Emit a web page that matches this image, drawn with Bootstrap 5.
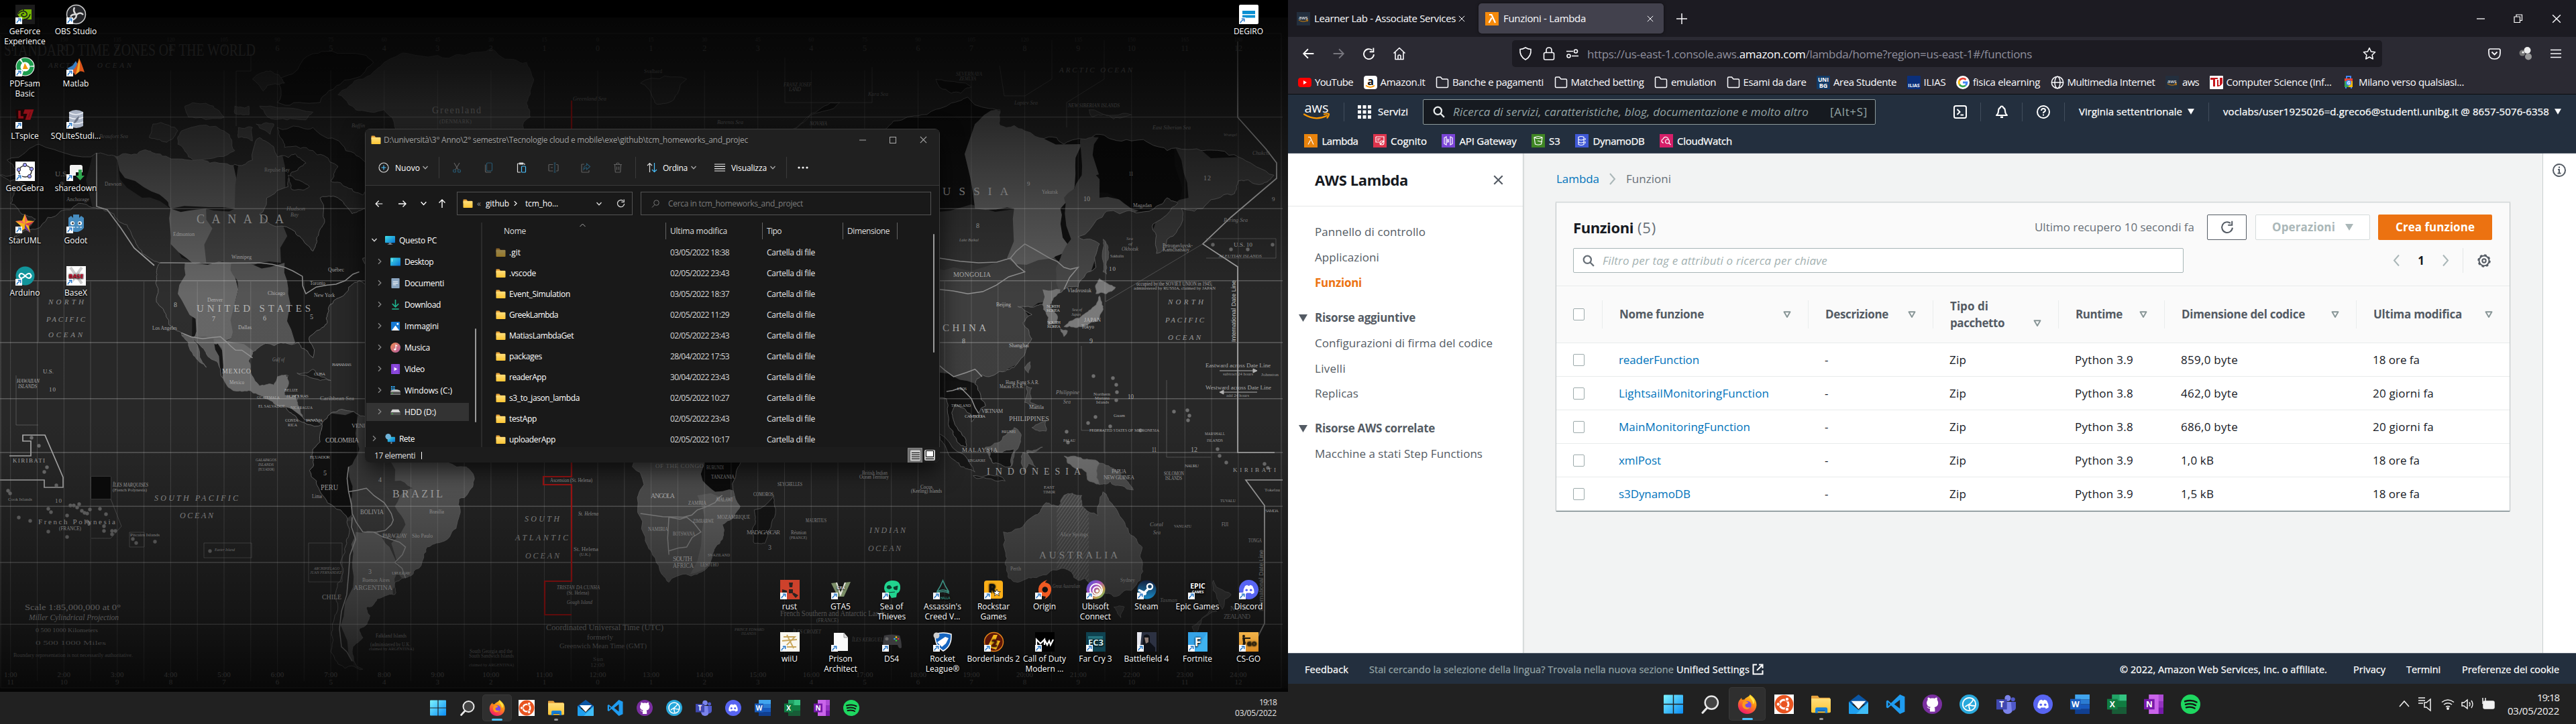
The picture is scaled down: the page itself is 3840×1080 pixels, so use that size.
<!DOCTYPE html>
<html lang="it">
<head>
<meta charset="utf-8">
<title>Desktop</title>
<link rel="stylesheet" href="https://cdn.jsdelivr.net/npm/bootstrap@5.3.0/dist/css/bootstrap.min.css">
<style>
body{width:3840px;height:1080px;overflow:hidden;background:#000;font-family:"Open Sans","Noto Sans",sans-serif;font-size:12px;line-height:15px;color:#fff}
svg{display:block;flex:none;overflow:visible}
[data-w]{white-space:pre;display:inline-block;flex:none}
.screen{width:1920px;height:1080px;overflow:hidden}
.wall{left:0;top:0;z-index:0}
.wall text{font-family:"Liberation Serif",serif}
.icon-grid{display:grid;grid-template-columns:repeat(25,76px);grid-template-rows:repeat(13,78px);padding-top:7px;margin-left:-1px;height:1032px;z-index:1}
.shortcut{font-size:12px;line-height:15px;text-shadow:0 1px 2px #000,0 0 3px #000;white-space:nowrap}
.shortcut .tile{width:29px;height:29px;margin-bottom:3px}
.shortcut .arrow{left:0;bottom:0}
.taskbar{background:#212121;z-index:2}
.taskbar-l{height:48px;padding-left:631px;padding-right:17px}
.taskbar-r{height:60px;padding-left:547px;padding-right:25px}
.taskbar-l .slot{width:44px;height:40px}
.taskbar-r .slot{width:55.1px;height:50px}
.slot-on{background:#2f2f2f;border-radius:5px;box-shadow:inset 0 0 0 1px #383838}
.slot .ind{bottom:1px;height:3px;border-radius:2px}
.clock{font-size:12px;line-height:16px;color:#e4e4e4}
.clock-lg{font-size:15px;line-height:20px;color:#f2f2f2}
/* file explorer */
.win{left:544px;top:192px;width:857px;height:498px;background:#191919;border-radius:8px;box-shadow:0 0 0 1px #3c3c3c inset,0 12px 34px rgba(0,0,0,.7);z-index:1;overflow:hidden}
.win-title{height:31px;padding-left:8px;color:#9d9d9d}
.win-head{background:#202020;border-bottom:1px solid #3a3a3a;height:84px;margin:1px 1px 0}
.win-tools{height:52px}
.vline{width:1px;background:#3b3b3b;flex:none}
.win-nav{height:54px;margin-top:1px;padding-bottom:3px}
.win-body{height:335px;overflow:hidden}
.fbox{border:1px solid #535353;height:35px}
.side{width:175px;border-right:2px solid #2b2b2b;height:335px}
.side-row{height:32px}
.side-on{background:#333}
.fhead{height:25px}
.fhead div{border-left:1px solid #636363;height:25px;padding-left:6px;line-height:25px;color:#dedede}
.frow{height:31px}
.c-name{width:240px}.c-date{width:144px}.c-type{width:120px}
.thumb{width:2px;background:#9a9a9a;border-radius:1px;z-index:2}
.win-status{background:#1c1c1c;height:24px;padding-left:14px;color:#dcdcdc}
/* browser */
.ff-tabs{background:#1c1b22;height:55px;font-size:15px;color:#fbfbfe}
.ff-tab{height:45px;margin-top:5px}
.ff-tab-on{background:#42414d;border-radius:5px;box-shadow:0 0 4px rgba(0,0,0,.5)}
.ff-nav{background:#2b2a33;height:50px}
.ff-url{background:#1c1b22;border-radius:5px;height:40px;width:1297px;font-size:17px;color:#8f8f9d}
.ff-url b{color:#fbfbfe;font-weight:400}
.ff-marks{background:#2b2a33;height:36px;font-size:15px;border-bottom:1px solid #0c0c0d;padding-left:15px;color:#fbfbfe}
.ff-marks .bm{margin-right:15.5px}
.aws-top{background:#232f3e;height:88px;border-bottom:1px solid #4b5563;font-size:15px}
.aws-top .fw-semibold,.aws-foot{font-weight:500!important;-webkit-text-stroke:.25px currentColor}
.aws-row{height:51px}
.aws-div{width:1px;height:28px;background:#414d5c;flex:none}
.aws-search{width:675px;height:38px;background:#161a20;border:1px solid #8d9a9b;border-radius:2px;font-size:17px;color:#95a5a6}
.aws-body{height:745px;background:#f2f3f3;font-size:17px;line-height:22px;color:#16191f}
.aws-side{width:351px;background:#fff;border-right:1px solid #c9cfcf;color:#545b64;box-shadow:1px 0 2px rgba(0,0,0,.08)}
.aws-side h2{font-size:22px;line-height:24px;font-weight:700;color:#16191f;margin:0}
.aws-side .ttl{height:79px;border-bottom:1px solid #e5e8e8;padding:0 29px 0 40px}
.nav-it{padding-left:40px;height:38px}
.nav-sec{padding-left:16px;font-weight:700;margin-top:15px;height:38px;gap:11px}
.act{color:#ec7211;font-weight:700}
.info-strip{width:50px;background:#fff;border-left:1px solid #c9cfcf}
.panel{width:1421px;margin-top:35px;background:#fff;box-shadow:0 1px 1px rgba(0,28,36,.5),0 0 1px 1px rgba(0,28,36,.13)}
.panel-top{background:#fafafa;height:125px;border-bottom:1px solid #e8ebeb;border-top:1px solid #eaeded}
.panel-h{font-size:22px}
.flt{width:910px;height:37px;border:1px solid #a7b5b6;border-radius:2px;background:#fff;color:#a3b1b1}
.bt{height:38px;border-radius:2px;font-weight:700;font-size:17px;padding:0;line-height:20px}
.bt-reload{width:59px;border:1px solid #545b64;background:#fff}
.bt-op{width:171px;border:1px solid #d5dbdb;background:#fff;color:#aab7b8}
.bt-go,.bt-go:hover{width:170px;background:#ec7211;color:#fff;border:0}
.fn-table{table-layout:fixed;margin:0;width:1421px;color:#16191f;--bs-table-bg:transparent}
.fn-table th{height:84px;background:#fafafa;color:#545b64;vertical-align:middle;padding:0;line-height:25px;border-bottom:1px solid #e8ebeb}
.fn-table th>div{height:42px;border-left:1px solid #eaeded;padding:0 25px 0 25px}
.fn-table th.first>div{border:0}
.fn-table td{height:50px;padding:1px 0 0 25px;vertical-align:middle;border-bottom:1px solid #e8ebeb}
.fn-table .first{padding-left:25px}
.fn-table th.first>div{padding:0}
.cbx{width:17px;height:18px;border:1px solid #9caaab;border-radius:2px;background:#fff}
.lnk{color:#0073bb}
.aws-foot{background:#232f3e;height:46px;border-top:1px solid #55606d;font-size:14.5px;padding:2px 25px 0}
</style>
</head>
<body class="d-flex">
<svg width="0" height="0" class="position-absolute">
<defs>
<linearGradient id="gw" x1="0" y1="0" x2="1" y2="1"><stop offset="0" stop-color="#7df3ff"/><stop offset="1" stop-color="#0a8df5"/></linearGradient>
<linearGradient id="gf" x1="0" y1="0" x2="0" y2="1"><stop offset="0" stop-color="#ffde7a"/><stop offset="1" stop-color="#fdc534"/></linearGradient>
<linearGradient id="gfx" x1=".8" y1="0" x2=".3" y2="1"><stop offset="0" stop-color="#ffe226"/><stop offset=".45" stop-color="#ff8a16"/><stop offset="1" stop-color="#f0136f"/></linearGradient>
<linearGradient id="gd" x1="0" y1="0" x2="1" y2="1"><stop offset="0" stop-color="#3fe0e8"/><stop offset="1" stop-color="#0a6fd0"/></linearGradient>
<linearGradient id="gm" x1="0" y1="0" x2="1" y2="1"><stop offset="0" stop-color="#f08a4e"/><stop offset="1" stop-color="#b65fa5"/></linearGradient>
<linearGradient id="gub" x1="0" y1="0" x2="1" y2="1"><stop offset="0" stop-color="#3a55d8"/><stop offset=".4" stop-color="#a54fc0"/><stop offset=".7" stop-color="#c7a24a"/><stop offset="1" stop-color="#2fae7a"/></linearGradient>
<linearGradient id="gst" x1="0" y1="0" x2="0" y2="1"><stop offset="0" stop-color="#141f3d"/><stop offset="1" stop-color="#1889c4"/></linearGradient>
<linearGradient id="gcs" x1="0" y1="0" x2="0" y2="1"><stop offset="0" stop-color="#f3b44a"/><stop offset="1" stop-color="#d98a22"/></linearGradient>
</defs>
<!-- taskbar -->
<symbol id="t-win" viewBox="0 0 24 24"><path fill="url(#gw)" d="M0 1.5Q0 .5 1 .5H11.4V11.4H0zM12.6.5H23q1 0 1 1v9.9H12.6zM0 12.6H11.4V23.5H1q-1 0-1-1zM12.6 12.6H24v9.9q0 1-1 1H12.6z"/></symbol>
<symbol id="t-search" viewBox="0 0 24 24"><circle cx="13.5" cy="10" r="8" fill="#444" stroke="#e8e8e8" stroke-width="2"/><path d="M8 16.5 2.5 22.5" stroke="#e8e8e8" stroke-width="2.6" stroke-linecap="round"/></symbol>
<symbol id="t-fox" viewBox="0 0 24 24"><path fill="url(#gfx)" d="M3 6.5 5 4.2l.6 2.3 3-.3C10 3.500 14 3.500 15.500 0c4 3 8.300 7 8 13.500C23 20 18 24 12 24S.8 19.500.7 13.300C.7 10 1.600 8 3 6.500z"/><circle cx="12.200" cy="13" r="5" fill="#7b4ae2"/><path d="M7 9c3-1.500 5 0 6.500 1-1 2-4 1-4 3.500 0 2 3 3.500 6 2-2 4.500-9.500 3.500-9.500-3z" fill="#ff9a1c"/><path d="M15.500 1c-1 4 4 5 3.500 11 2-1 2-4 1.500-5.500C19.500 4.500 17 3 15.500 1z" fill="#ffe74a"/></symbol>
<symbol id="t-ubu" viewBox="0 0 24 24"><path fill="#fff" d="M0 0h24v24H0z"/><circle cx="12" cy="12" r="11.400" fill="#e95420"/><circle cx="12" cy="12" r="5.400" fill="none" stroke="#fff" stroke-width="2.400"/><g fill="#fff" stroke="#e95420"><circle cx="4.800" cy="12" r="2.300"/><circle cx="15.700" cy="5.800" r="2.300"/><circle cx="15.700" cy="18.200" r="2.300"/></g></symbol>
<symbol id="t-exp" viewBox="0 0 24 24"><path fill="#e8a33d" d="M0 2.500q0-1 1-1h7l2 2.500h13v6H0z"/><path fill="url(#gf)" d="M0 5h23q1 0 1 1v15q0 1.500-1.500 1.500h-21Q0 22.500 0 21z"/><path fill="#1680d8" d="M5 23v-5q0-2 2-2h11q2 0 2 2v5h-3v-3H8v3z"/><path fill="#0b5cae" d="M8 19.500h9V21H8z"/></symbol>
<symbol id="t-mail" viewBox="0 0 24 24"><path fill="#0b56a4" d="M0 9 12 0l12 9v3H0z"/><path fill="#1fa0f0" d="M0 9v14q0 1 1 1h22q1 0 1-1V9L12 19z"/><path fill="#fff" d="M3 8h18l-9 10z"/><path fill="#56d0fb" d="m24 10-15 14h14q1 0 1-1z" opacity=".6"/></symbol>
<symbol id="t-vs" viewBox="0 0 24 24"><path fill="#1f9cf0" d="m17.500 0 6 2.700v18.600l-6 2.700L6.500 13.500 2.500 17 .7 16V8l1.800-1 4 3.500zm0 6.600L10.500 12l7 5.400zM3 9.500v5L5.500 12z" fill-rule="evenodd"/></symbol>
<symbol id="t-git" viewBox="0 0 24 24"><circle cx="12" cy="12" r="12" fill="#7a2fa0"/><path fill="#fff" d="M12 4.500c1.200 0 2 .1 2.700.4 1.300-.9 2.300-1.200 3-1.200.5 1.300.3 2.400.2 2.900 2.400 3 1.600 8.600-3.400 9.200.6.700.7 1.400.7 2.300v3H9v-3.700c-2 .3-3-1-3.700-2.200 1.700-.2 2 2 3.900 1.300.1-.3.300-.6.600-.9-5-.6-6-6-3.400-9-.3-1-.3-2 .2-2.900 1 0 2 .5 3 1.200.7-.3 1.600-.4 2.400-.4z"/></symbol>
<symbol id="t-circ" viewBox="0 0 24 24"><circle cx="12" cy="12" r="12" fill="#2aa9dc"/><circle cx="12" cy="12" r="8" fill="none" stroke="#fff" stroke-width="1.500"/><path d="M17 6c-2 5-5 6-10 9M12 12c1 2 4 2 7 2M12 12c-1 3 0 5 1 7" fill="none" stroke="#fff" stroke-width="1.500"/></symbol>
<symbol id="t-teams" viewBox="0 0 24 24"><circle cx="14" cy="4.500" r="3.800" fill="#7b83eb"/><circle cx="20.500" cy="6" r="2.500" fill="#5059c9"/><path fill="#7b83eb" d="M8 9h12v9a6 6 0 0 1-12 0z"/><path fill="#5059c9" d="M18 9h6v7a4 4 0 0 1-5 4z"/><path fill="#4048b0" d="M0 6h13v12.500H0z"/><text x="6.500" y="15.800" font-size="10" font-weight="700" fill="#fff" text-anchor="middle">T</text></symbol>
<symbol id="t-disc" viewBox="0 0 24 24"><circle cx="12" cy="12" r="12" fill="#5865f2"/><path fill="#fff" d="M7.500 7.500q2-1 3-1l.4.800h2.200l.4-.8q1 0 3 1 2.500 4 2.300 8.500-1.500 1.300-3.300 1.600l-.8-1.400H9.300l-.8 1.400q-1.800-.3-3.300-1.600Q5 11.500 7.500 7.500z"/><circle cx="9.300" cy="12.600" r="1.500" fill="#5865f2"/><circle cx="14.700" cy="12.600" r="1.500" fill="#5865f2"/></symbol>
<symbol id="t-word" viewBox="0 0 24 24"><path fill="#41a5ee" d="M6 0h18v6H6z"/><path fill="#2b7cd3" d="M6 6h18v6H6z"/><path fill="#185abd" d="M6 12h18v6H6z"/><path fill="#103f91" d="M6 18h18v6H6z"/><path fill="#1a5dbe" d="M0 5.500h13v13H0z"/><text x="6.500" y="15.800" font-size="10" font-weight="700" fill="#fff" text-anchor="middle">W</text></symbol>
<symbol id="t-xl" viewBox="0 0 24 24"><path fill="#21a366" d="M6 0h9v8H6z"/><path fill="#33c481" d="M15 0h9v8h-9z"/><path fill="#107c41" d="M6 8h18v8H6z"/><path fill="#185c37" d="M6 16h18v8H6z"/><path fill="#107c41" d="M0 5.500h13v13H0z"/><text x="6.500" y="15.800" font-size="10" font-weight="700" fill="#fff" text-anchor="middle">X</text></symbol>
<symbol id="t-one" viewBox="0 0 24 24"><path fill="#ca64ea" d="M6 0h18v24H6z"/><path fill="#ae4bd5" d="M18 0h6v8h-6z"/><path fill="#9332bf" d="M18 8h6v8h-6z"/><path fill="#7719aa" d="M18 16h6v8h-6zM0 5.500h13v13H0z"/><text x="6.500" y="15.800" font-size="10" font-weight="700" fill="#fff" text-anchor="middle">N</text></symbol>
<symbol id="t-spot" viewBox="0 0 24 24"><circle cx="12" cy="12" r="12" fill="#1ed760"/><path d="M5 8.500q8-2.500 14.500 1M5.800 12.300q7-2 12.400 1M6.600 16q6-1.500 10.400 1" fill="none" stroke="#121212" stroke-width="2" stroke-linecap="round"/></symbol>
<!-- common -->
<symbol id="fold" viewBox="0 0 16 16"><path fill="#e9a53a" d="M0 1.500Q0 .7.800.7H5.500L7.500 3H15v4H0z"/><path fill="url(#gf)" d="M0 3.500h15.200q.8 0 .8.800v9.500q0 1-1 1H1q-1 0-1-1z"/></symbol>
<symbol id="lnk" viewBox="0 0 10 10"><path fill="#fff" d="M0 0h10v10H0z"/><path d="M2.300 8.500Q2 5.500 6.500 3.800M3.800 2.300H7.800V6.300" fill="none" stroke="#1a6fc4" stroke-width="1.400"/></symbol>
<symbol id="bfold" viewBox="0 0 20 20"><path d="M1.500 3.500Q1.500 2 3 2h4.500l2.500 3h7q1.500 0 1.500 1.500V16q0 1.500-1.500 1.500H3Q1.500 17.500 1.500 16z" fill="none" stroke="#fbfbfe" stroke-width="1.500"/></symbol>
<symbol id="aws" viewBox="0 0 40 25"><text x="19.500" y="13.500" font-size="19.500" font-weight="500" fill="#fff" text-anchor="middle" textLength="36" lengthAdjust="spacingAndGlyphs">aws</text><path d="M1 16.500q17 10.500 34 2M31 16.200q6-1.500 7 0 .3 2-2.500 5.500" fill="none" stroke="#f90" stroke-width="2.200" stroke-linecap="round"/></symbol>
<symbol id="tri" viewBox="0 0 12 10"><path d="M1.500 1.200h9L6 9z" fill="none" stroke="#879596" stroke-width="1.900" stroke-linejoin="round"/></symbol>
<symbol id="trif" viewBox="0 0 12 10"><path d="M0 0h12L6 10z" fill="currentColor"/></symbol>
<symbol id="xx" viewBox="0 0 12 12"><path d="m1 1 10 10M11 1 1 11" stroke="currentColor" stroke-width="1.200" fill="none"/></symbol>
<symbol id="chd" viewBox="0 0 10 10"><path d="m1.500 3 3.500 3.700L8.500 3" stroke="currentColor" stroke-width="1.300" fill="none"/></symbol>
<symbol id="chr" viewBox="0 0 10 10"><path d="m3 1.200 3.800 3.800L3 8.800" stroke="currentColor" stroke-width="1.300" fill="none"/></symbol>
<symbol id="arl" viewBox="0 0 16 16"><path d="M15 8H2M7.500 2 1.500 8l6 6" stroke="currentColor" stroke-width="1.600" fill="none"/></symbol>
<symbol id="rel" viewBox="0 0 16 16"><path d="M14.300 8.500A6.300 6.300 0 1 1 12 3.200M13.800.5v4.800H9" stroke="currentColor" stroke-width="1.600" fill="none"/></symbol>
<symbol id="mag" viewBox="0 0 16 16"><circle cx="6.500" cy="6.500" r="5" fill="none" stroke="currentColor" stroke-width="2"/><path d="m10 10 5 5" stroke="currentColor" stroke-width="2"/></symbol>
</svg>

<!-- ============ left monitor ============ -->
<section class="screen position-relative d-flex flex-column">
  <svg class="wall position-absolute" width="1920" height="1040" viewBox="0 0 1920 1040" id="wall"></svg>
  <div class="icon-grid position-relative" id="icons"></div>

  <div class="win position-absolute">
    <div class="win-head">
      <div class="win-title d-flex align-items-center">
        <svg width="15" height="14"><use href="#fold"/></svg><span class="ms-1" data-w="543">D:\università\3° Anno\2° semestre\Tecnologie cloud e mobile\exe\github\tcm_homeworks_and_projec</span>
        <div class="ms-auto d-flex align-items-center" style="gap:35px;margin-right:18px">
          <svg width="10" height="10"><path d="M0 5h10" stroke="#aaa"/></svg><svg width="10" height="10"><rect x=".5" y=".5" width="9" height="9" fill="none" stroke="#aaa"/></svg><svg width="11" height="11" color="#aaa"><use href="#xx"/></svg>
        </div>
      </div>
      <div class="win-tools d-flex align-items-center" id="tools"></div>
    </div>
    <div class="win-nav d-flex align-items-center" id="wnav"></div>
    <div class="win-body d-flex">
      <div class="side position-relative" id="side"></div>
      <div class="flex-grow-1 position-relative" id="files"></div>
    </div>
    <div class="win-status d-flex align-items-center"><span data-w="61">17 elementi</span><span class="vline bg-white" style="height:11px;margin-left:9px"></span>
      <svg class="ms-auto me-1" width="44" height="23"><path fill="#6d6d6d" stroke="#8d8d8d" d="M.5.500h21v22H.5z"/><rect x="4" y="3.500" width="15" height="16" rx="1.500" fill="#c9c9c9"/><path d="M6 7.500h12M6 10.500h12M6 13.500h12M6 16.500h12" stroke="#000"/><rect x="25" y="3" width="16" height="16" rx="2" fill="#c9c9c9"/><path d="M27.500 4.500h11v9h-11z" fill="#fff" stroke="#000"/><path d="M27 16.500h12" stroke="#000"/></svg>
    </div>
  </div>

  <div class="taskbar taskbar-l d-flex align-items-center mt-auto position-relative">
    <div class="d-flex" data-tasks="24"></div>
    <div class="ms-auto d-flex flex-column align-items-end clock"><span data-w="26">19:18</span><span data-w="62">03/05/2022</span></div>
  </div>
</section>

<!-- ============ right monitor ============ -->
<section class="screen d-flex flex-column">
  <div class="ff-tabs d-flex">
    <div class="ff-tab d-flex align-items-center" style="width:284px;padding-left:13px">
      <svg width="20" height="20"><rect width="20" height="20" fill="#232f3e"/><use href="#aws" x="2.500" y="5" width="15" height="11"/></svg>
      <span style="margin-left:6px" data-w="211">Learner Lab - Associate Services</span><svg class="ms-1" width="10" height="10"><use href="#xx"/></svg>
    </div>
    <div class="ff-tab ff-tab-on d-flex align-items-center" style="width:276px;padding:0 15px 0 10px">
      <svg width="20" height="20" viewBox="0 0 20 20"><path fill="#f58a0b" d="M0 0h20v20H0z"/><path d="M6 4h3.500l5.500 12M9.700 8.500 5.500 16" fill="none" stroke="#fff" stroke-width="2.200"/></svg>
      <span style="margin-left:7px" data-w="123">Funzioni - Lambda</span><svg class="ms-auto" width="10" height="10"><use href="#xx"/></svg>
    </div>
    <svg width="16" height="16" style="margin:20px 0 0 19px"><path d="M8 0v16M0 8h16" stroke="#fbfbfe" stroke-width="1.500"/></svg>
    <div class="ms-auto d-flex align-items-center" style="gap:43px;margin-right:22px">
      <svg width="12" height="12"><path d="M0 6h12" stroke="#fff" stroke-width="1.300"/></svg><svg width="14" height="14"><path d="M1 4h8.500v8.500H1zM4 4V1h8.500v8.500H9.500" fill="none" stroke="#fff" stroke-width="1.200"/></svg><svg width="14" height="14"><use href="#xx"/></svg>
    </div>
  </div>
  <div class="ff-nav d-flex align-items-center">
    <div class="d-flex align-items-center" style="gap:26px;padding-left:21px;width:334px">
      <svg width="19" height="18"><use href="#arl"/></svg>
      <svg width="19" height="18" viewBox="0 0 16 16" color="#77767e"><use href="#arl" width="16" height="16" transform="matrix(-1 0 0 1 16 0)"/></svg>
      <svg width="19" height="19"><use href="#rel"/></svg>
      <svg width="20" height="20" viewBox="0 0 20 20"><path d="M1.500 9.500 10 1.500l8.500 8M4 8v10.500h12V8M8 18v-5q2-2 4 0v5" fill="none" stroke="#fbfbfe" stroke-width="1.600" stroke-linejoin="round"/></svg>
    </div>
    <div class="ff-url d-flex align-items-center" style="padding:0 9px 0 10px">
      <svg width="20" height="20" viewBox="0 0 20 20"><path d="M10 1q4 2.500 8 2.500Q19 14 10 19 1 14 2 3.500 6 3.500 10 1z" fill="none" stroke="#fbfbfe" stroke-width="1.600"/></svg>
      <svg width="20" height="20" viewBox="0 0 20 20" style="margin-left:15px"><rect x="2.500" y="8.500" width="15" height="10.500" rx="2" fill="none" stroke="#fbfbfe" stroke-width="1.600"/><path d="M6 8.500V5q0-4 4-4t4 4v3.500" fill="none" stroke="#fbfbfe" stroke-width="1.600"/></svg>
      <svg width="20" height="14" viewBox="0 0 20 14" style="margin-left:15px"><path d="M1 3.500h10M9 10.500h10" stroke="#fbfbfe" stroke-width="1.700"/><circle cx="15" cy="3.500" r="2.500" fill="none" stroke="#fbfbfe" stroke-width="1.600"/><circle cx="4.500" cy="10.500" r="2.500" fill="none" stroke="#fbfbfe" stroke-width="1.600"/></svg>
      <span style="margin-left:12px" data-w="663">https://us-east-1.console.aws.<b>amazon.com</b>/lambda/home?region=us-east-1#/functions</span>
      <svg class="ms-auto" width="20" height="20" viewBox="0 0 20 20"><path d="m10 1.500 2.600 5.600 6 .7-4.500 4.200 1.200 6L10 15l-5.300 3 1.200-6L1.400 7.800l6-.7z" fill="none" stroke="#fbfbfe" stroke-width="1.500" stroke-linejoin="round"/></svg>
    </div>
    <div class="ms-auto d-flex align-items-center" style="gap:27px;margin-right:22px">
      <svg width="19" height="17" viewBox="0 0 19 17"><path d="M3 1h13q2 0 2 2v4q0 9-8.500 9T1 7V3q0-2 2-2z" fill="none" stroke="#fbfbfe" stroke-width="1.700"/><path d="m5.500 5.500 4 4 4-4" fill="none" stroke="#fbfbfe" stroke-width="1.800"/></svg>
      <svg width="20" height="20" viewBox="0 0 20 20"><circle cx="5" cy="9" r="4.500" fill="#777"/><circle cx="12.500" cy="5" r="5" fill="#eee"/><circle cx="14" cy="14.500" r="5" fill="#999"/><circle cx="6" cy="8" r="1.500" fill="#fff"/></svg>
      <svg width="16" height="14"><path d="M0 1.500h16M0 7h16M0 12.500h16" stroke="#fbfbfe" stroke-width="1.700"/></svg>
    </div>
  </div>
  <div class="ff-marks d-flex align-items-center" id="marks"></div>

  <header class="aws-top">
    <div class="aws-row d-flex align-items-center">
      <svg width="40" height="25" style="margin-left:23px"><use href="#aws"/></svg>
      <span class="aws-div" style="margin:0 20px"></span>
      <svg width="20" height="20" viewBox="0 0 20 20"><path d="M0 0h5v5H0zM7.500 0h5v5h-5zM15 0h5v5h-5zM0 7.500h5v5H0zM7.500 7.500h5v5h-5zM15 7.500h5v5h-5zM0 15h5v5H0zM7.500 15h5v5h-5zM15 15h5v5h-5z" fill="#fff"/></svg>
      <span class="fw-semibold" style="margin-left:10px" data-w="45">Servizi</span>
      <div class="aws-search d-flex align-items-center" style="margin-left:22px;padding:0 11px 0 14px"><svg width="18" height="18" color="#eaeded"><use href="#mag"/></svg><i style="margin-left:12px" data-w="530">Ricerca di servizi, caratteristiche, blog, documentazione e molto altro</i><span class="ms-auto" data-w="56">[Alt+S]</span></div>
      <div class="ms-auto d-flex align-items-center fw-semibold" style="margin-right:22px">
        <svg width="20" height="20" viewBox="0 0 20 20"><rect x="1" y="1" width="18" height="18" rx="2.500" fill="none" stroke="#fff" stroke-width="2"/><path d="m5.500 6 4 4-4 4M10.500 14.500h4.500" fill="none" stroke="#fff" stroke-width="2"/></svg>
        <span class="aws-div" style="margin:0 21px 0 20px"></span>
        <svg width="20" height="20" viewBox="0 0 20 20"><path d="M10 1.500q-2 0-2 2-3 1-3 5 0 4-3 6.500h16q-3-2.500-3-6.500 0-4-3-5 0-2-2-2z" fill="none" stroke="#fff" stroke-width="2" stroke-linejoin="round"/><path d="M8 16.500h4V19H8z" fill="#fff"/></svg>
        <span class="aws-div" style="margin:0 21px 0 20px"></span>
        <svg width="20" height="20" viewBox="0 0 20 20"><circle cx="10" cy="10" r="9" fill="none" stroke="#fff" stroke-width="2"/><path d="M7 8q0-3 3-3t3 2.500q0 1.500-2 2.500-1 .5-1 2M10 13.500v2" fill="none" stroke="#fff" stroke-width="2"/></svg>
        <span class="aws-div" style="margin:0 21px"></span>
        <span data-w="154">Virginia settentrionale</span><svg class="ms-2" width="10" height="9"><use href="#trif"/></svg>
        <span class="aws-div" style="margin:0 21px"></span>
        <span data-w="486">voclabs/user1925026=d.greco6@studenti.unibg.it @ 8657-5076-6358</span><svg class="ms-2" width="10" height="9"><use href="#trif"/></svg>
      </div>
    </div>
    <div class="d-flex align-items-center fw-semibold" id="favs" style="height:36px;padding-left:24px;gap:22px"></div>
  </header>

  <div class="aws-body d-flex">
    <aside class="aws-side">
      <div class="ttl d-flex align-items-center justify-content-between"><h2 data-w="139">AWS Lambda</h2><svg width="15" height="15" viewBox="0 0 12 12"><path d="m1 1 10 10M11 1 1 11" stroke="#545b64" stroke-width="1.700"/></svg></div>
      <div style="height:19px"></div>
      <div class="nav-it d-flex align-items-center"><span data-w="165">Pannello di controllo</span></div>
      <div class="nav-it d-flex align-items-center"><span data-w="96">Applicazioni</span></div>
      <div class="nav-it d-flex align-items-center act" style="height:37px"><span data-w="70">Funzioni</span></div>
      <div class="nav-sec d-flex align-items-center"><svg width="13" height="11"><use href="#trif"/></svg><span data-w="150">Risorse aggiuntive</span></div>
      <div class="nav-it d-flex align-items-center"><span data-w="265">Configurazioni di firma del codice</span></div>
      <div class="nav-it d-flex align-items-center"><span data-w="46">Livelli</span></div>
      <div class="nav-it d-flex align-items-center" style="height:36px"><span data-w="65">Replicas</span></div>
      <div class="nav-sec d-flex align-items-center"><svg width="13" height="11"><use href="#trif"/></svg><span data-w="179">Risorse AWS correlate</span></div>
      <div class="nav-it d-flex align-items-center"><span data-w="250">Macchine a stati Step Functions</span></div>
    </aside>
    <main style="padding:26px 0 0 49px">
      <div class="d-flex align-items-center" style="height:24px;margin-bottom:-12px"><span class="lnk" data-w="64">Lambda</span><svg width="10" height="18" viewBox="0 0 10 18" style="margin:0 15px"><path d="m1 1 7 8-7 8" fill="none" stroke="#aab7b8" stroke-width="2"/></svg><span data-w="67" style="color:#687078">Funzioni</span></div>
      <div class="panel">
        <div class="panel-top">
          <div class="d-flex align-items-center" style="padding:17px 26px 0 25px">
            <span class="panel-h fw-bold" data-w="90">Funzioni</span><span class="panel-h" data-w="28" style="margin-left:6px;color:#687078">(5)</span>
            <span class="ms-auto" data-w="238" style="color:#687078;margin-right:19px">Ultimo recupero 10 secondi fa</span>
            <button class="btn bt bt-reload d-flex align-items-center justify-content-center"><svg width="20" height="20" color="#545b64"><use href="#rel"/></svg></button>
            <button class="btn bt bt-op d-flex align-items-center justify-content-center" style="margin:0 12px 0 13px;gap:15px"><span data-w="94">Operazioni</span><svg width="12" height="10"><use href="#trif"/></svg></button>
            <button class="btn bt bt-go"><span data-w="118">Crea funzione</span></button>
          </div>
          <div class="d-flex align-items-center" style="padding:12px 28px 0 25px">
            <div class="flt d-flex align-items-center" style="padding-left:13px"><svg width="18" height="18" color="#687078"><use href="#mag"/></svg><i data-w="335" style="margin-left:12px">Filtro per tag e attributi o ricerca per chiave</i></div>
            <div class="ms-auto d-flex align-items-center">
              <svg width="10" height="19" viewBox="0 0 10 18"><path d="m9 1-7 8 7 8" fill="none" stroke="#aab7b8" stroke-width="2"/></svg><b style="margin:0 27px">1</b><svg width="10" height="19" viewBox="0 0 10 18"><path d="m1 1 7 8-7 8" fill="none" stroke="#aab7b8" stroke-width="2"/></svg>
              <span style="width:1px;height:37px;background:#e3e7e7;margin:0 21px 0 20px"></span>
              <svg width="20" height="20" viewBox="0 0 20 20"><circle cx="10" cy="10" r="7.500" fill="none" stroke="#545b64" stroke-width="2"/><circle cx="10" cy="10" r="8.800" fill="none" stroke="#545b64" stroke-width="1.800" stroke-dasharray="3.500 3.410"/><circle cx="10" cy="10" r="2.700" fill="none" stroke="#545b64" stroke-width="2"/></svg>
            </div>
          </div>
        </div>
        <table class="table fn-table" id="fn"></table>
      </div>
    </main>
    <div class="info-strip ms-auto" style="padding:15px 0 0 14px"><svg width="20" height="20" viewBox="0 0 20 20"><circle cx="10" cy="10" r="9" fill="none" stroke="#545b64" stroke-width="2"/><path d="M10 4.500v2.200M8 9h2v5M7.500 14.500h5" fill="none" stroke="#545b64" stroke-width="2"/></svg></div>
  </div>
  <footer class="aws-foot d-flex align-items-center">
    <span data-w="65">Feedback</span><span data-w="454" style="margin-left:31px;color:#95a5a6">Stai cercando la selezione della lingua? Trovala nella nuova sezione</span><span data-w="109" style="margin-left:4px">Unified Settings</span>
    <svg class="ms-1" width="17" height="17" viewBox="0 0 17 17"><path d="M7 1.500H1.500v14h14V10M10 1.500h5.500V7M15 2 7 10" fill="none" stroke="#fff" stroke-width="2"/></svg>
    <span class="ms-auto" data-w="309">© 2022, Amazon Web Services, Inc. o affiliate.</span><span data-w="48" style="margin-left:39px">Privacy</span><span data-w="51" style="margin-left:31px">Termini</span><span data-w="145" style="margin-left:32px">Preferenze dei cookie</span>
  </footer>
  <div class="taskbar taskbar-r d-flex align-items-center">
    <div class="d-flex" data-tasks="29"></div>
    <div class="ms-auto d-flex align-items-center">
      <svg width="144" height="24" viewBox="0 0 144 24" style="margin-right:18px" fill="none" stroke="#f2f2f2" stroke-width="1.500"><path d="m1 16 7-8 7 8"/><path d="M29 3h10M29 7h10M29 11h7"/><path d="M38 10h3l6-5v17l-6-5h-3z"/><path d="M64 9.500q9-7 18 0M67 13q6-4.500 12 0M70 16.500q3-2.200 6 0"/><circle cx="73" cy="19" r="1.200" fill="#fff"/><path d="M94 10h3l5-4v13l-5-4h-3zM105 9.500q2 3 0 6M108 7q4 5.500 0 11"/><rect x="126" y="8" width="16" height="11" rx="2" fill="#f2f2f2"/><path d="M125 3v9M129 3v5"/></svg>
      <div class="d-flex flex-column align-items-end clock clock-lg"><span data-w="33">19:18</span><span data-w="77">03/05/2022</span></div>
    </div>
  </div>
</section>

<script src="https://cdn.jsdelivr.net/npm/bootstrap@5.3.0/dist/js/bootstrap.bundle.min.js"></script>
<script>
const $ = id => document.getElementById(id);

/* ---------- world map wallpaper (Miller projection) ---------- */
const X = l => 891 + l * 5.305;
const Y = p => 675 - 304 * 1.25 * Math.log(Math.tan(Math.PI / 4 + 0.4 * p * Math.PI / 180));
let seed = 7; const rnd = () => (seed = (seed * 16807) % 2147483647) / 2147483647 - .5;
function pts(s) { const a = s.trim().split(/[\s,]+/).map(Number), r = []; for (let i = 0; i < a.length; i += 2) r.push([X(a[i]), Y(a[i + 1])]); return r; }
function rough(p, k) { for (let n = 0; n < k; n++) { const q = []; p.forEach((a, i) => { const b = p[(i + 1) % p.length], d = Math.hypot(a[0] - b[0], a[1] - b[1]); q.push(a); if (d > 4) q.push([(a[0] + b[0]) / 2 + rnd() * d * .3, (a[1] + b[1]) / 2 + rnd() * d * .3]); }); p = q; } return p; }
const path = p => 'M' + p.map(a => a[0].toFixed(1) + ' ' + a[1].toFixed(1)).join('L') + 'Z';
const land = (s, k = 3) => path(rough(pts(s), k));
const NA = land('-168 66,-162 66.5,-166 68.5,-157 71,-141 69.6,-135 69,-128 70,-124 69.5,-115 68.5,-109 68,-102 67.8,-97 68.5,-95 72,-92 71,-90 69,-85 69.5,-82 68,-86 66.5,-87 64,-93 62,-95 59,-92 57,-85 55.5,-82 53,-80 51.5,-79 54,-77 57,-78 62,-73 62,-69 59,-65 60,-64 58,-61 56,-56 52,-60 50,-66 50,-65 48,-61 46,-65 44,-67 45,-70 43.5,-71 42,-74 40.5,-76 37,-76 35,-81 31.5,-80 26,-82 28,-84 30,-89 30,-94 29.5,-97 27.5,-97.5 22,-95 18.5,-91 18.7,-90 21,-87 21.3,-88 16,-84 15.8,-83.5 11,-81 9,-79 9.5,-77.5 8,-80 7.5,-83 8.5,-86 11,-88 13,-92 14.5,-95 16,-100 17,-105 20,-106 23,-109 26,-112.5 30,-114.5 31.5,-112 28,-110 23.5,-112 25,-114.5 28,-117 32.5,-120.5 34.5,-124 40,-124 46,-123 49,-128 51,-131 55,-135 58,-140 60,-146 61,-151 59.5,-158 56,-164 54.5,-158 58,-162 59,-165 61,-164 63,-161 64.5');
const SA = land('-77.5 8,-75 11,-71.5 12,-68 11,-62 10.5,-57 6,-51 4.5,-50 0,-44 -2.5,-38 -4,-35 -6,-35 -9,-39 -13,-39 -18,-41 -22,-48 -26,-49 -29,-53 -33.5,-57 -35,-57 -38,-62 -39,-65 -41,-64 -43,-67 -46,-66 -48,-69 -51,-68.5 -53,-66 -54.7,-71 -54.5,-75 -51,-74.5 -46,-73 -41,-73.5 -37,-71.5 -32,-70.5 -25,-70.3 -18.5,-76 -14,-79 -8,-81 -5,-80 -2.5,-80 1,-78 3,-77.5 7');
const AF = land('-17 15,-17 21,-10 30,-6 36,10 37,20 32,33 31,43 12,51 12,42 0,39 -5,40 -15,35 -20,35 -24,32 -28,28 -33,20 -35,18 -33,15 -27,12 -18,13 -9,9 0,9 4,-8 4.5');
const EA = land('60 69,68 68,70 73,80 73,87 75,98 76.5,104 77.7,113 76,113 73.8,120 73,129 72,131 71,140 72.5,150 71.500,160 70,170 70,180 69,190 66,187 64.5,180 65,178 62.5,170 60,164 60,163 56,157 51,156 57,163 61,160 62,155 59.5,143 59.5,135 54.5,141 53,140 48,135 43.5,131 43,128 41,127 39,129 37,129 35,126.5 34.5,126 37.5,125 39.5,121 39,118 39,122 37,119.5 35,122 31,120 27,117 23.5,110 21,108 21.5,106 19,109 13,107 10.5,105 8.6,105 10.5,102.5 12.5,100.5 13.5,99.5 11,101 7,103.5 1.5,101 3,98.5 8,98 15,94 17,90 22,80 15,77 8,72 20,60 25');
const AU = land('114 -22,122 -18,126 -14,129.5 -15,131 -12,136 -12,136 -15,140.5 -17.5,142 -11,145 -15,149 -21,153 -26,153 -31,150 -37,145 -38.5,140 -37.5,137 -34,135 -34.5,131 -31.5,124 -33.5,118 -35,115.5 -34,115 -29');
let m = `<defs><pattern id="ht" width="4" height="4" patternUnits="userSpaceOnUse" patternTransform="rotate(35)"><path d="M0 0v4" stroke="#777" stroke-width="2.400"/></pattern>
<linearGradient id="shade" x1="0" y1="0" x2="0" y2="1"><stop offset="0" stop-opacity=".9"/><stop offset=".1" stop-opacity=".76"/><stop offset=".2" stop-opacity=".52"/><stop offset=".3" stop-opacity=".28"/><stop offset=".42" stop-opacity=".05"/><stop offset=".62" stop-opacity=".06"/><stop offset=".75" stop-opacity=".26"/><stop offset=".88" stop-opacity=".5"/><stop offset="1" stop-opacity=".84"/></linearGradient>`;
[['na', NA], ['sa', SA], ['af', AF], ['ea', EA], ['au', AU]].forEach(([i, d]) => m += `<clipPath id="c-${i}"><path d="${d}"/></clipPath>`);
m += `</defs><rect width="1920" height="1040" fill="#2a2a2a"/>`;
function zone(clip, base, list) { const d = { na: NA, sa: SA, af: AF, ea: EA, au: AU }[clip]; m += `<path d="${d}" fill="${base}"/><g clip-path="url(#c-${clip})">` + list.map(([f, s]) => `<path fill="${f}" d="${land(s, 2)}"/>`).join('') + `</g><path d="${d}" fill="none" stroke="#707070" stroke-width=".9"/>`; }
zone('na', '#181818', [['#303030', '-141 72,-136 70,-128 62,-120 60,-120 53,-114 49,-114 31,-130 31,-141 58'], ['#585858', '-137 70,-102 73,-102 60,-120 60,-122 62,-130 65'], ['#444', '-102 73,-89 73,-89 58,-89 49,-102 49,-110 49,-110 60,-102 60'], ['#666', '-120 60,-110 60,-110 49,-114 49,-120 53'], ['#6c6c6c', '-116 49,-103 49,-101 43,-103 31,-114 31,-113 36,-118 42'], ['#585858', '-103 49,-88 49,-87 42,-85 30,-97 24,-107 30,-103 31,-101 43'], ['#707070', '-108 31,-97 28,-88 22,-82 9,-90 13,-105 18'], ['#606060', '-118 32,-108 31,-106 22,-112 22']]);
zone('sa', '#404040', [['#121212', '-82 12,-67 12,-67 1,-70 -4,-69 -11,-69 -17,-71 -19,-82 -10'], ['#303030', '-76 -19,-69 -19,-70 -50,-68 -56,-78 -56'], ['#626262', '-57 1,-50 6,-33 0,-33 -20,-48 -36,-55 -34,-58 -25,-54 -20,-57 -15,-52 -10,-57 -8'], ['#666', '-68 -22,-62 -22,-58 -27,-57 -36,-60 -42,-64 -50,-66 -54,-70 -52,-71 -40,-69 -30']]);
zone('af', '#5a5a5a', [['#0e0e0e', '29 2,42 2,42 -11,33 -11,29 -6'], ['#6c6c6c', '28 -12,41 -12,41 -20,33 -30,26 -33,30 -18']]);
zone('ea', '#121212', [['#424242', '80 52,96 51,117 53,126 53,135 48,131 42,120 38,125 30,108 18,100 21,90 25,75 35'], ['#363636', '90 59,118 60,118 50,100 48,90 50'], ['#636363', '106 74,112 76,136 71,134 64,130 60,133 52,128 50,115 50,117 60,106 60'], ['#4c4c4c', '136 73,146 72,146 66,140 66,141 62,150 62,153 60,142 55,138 42,130 42,130 50,133 54,131 62,136 66'], ['#0c0c0c', '142 73,160 72,162 70,163 60,150 60,141 63'], ['#3c3c3c', '161 72,192 70,192 60,165 45,154 50,157 60,166 62'], ['#777', '125 43,130 43,131 33,124 33'], ['#141414', '97 20,109 20,111 10,104 7,97 10']]);
zone('au', '#555', []);
m += `<g clip-path="url(#c-au)"><path fill="url(#ht)" d="M${X(129)} 700h${9 * 5.305}v200h-${9 * 5.305}z"/></g>`;
[['#4a4a4a', '-117 73,-105 73,-102 70,-107 69,-115 69,-118 71'], ['#3a3a3a', '-125 74,-118 73,-121 71.3,-126 72'], ['#171717', '-90 73.5,-80 73.5,-72 71,-65 68,-62 66,-66 62.5,-71 64,-75 65,-73 67.5,-80 70,-88 70.5'], ['#1a1a1a', '-90 77,-90 80,-80 83,-65 82.8,-63 82,-72 79.5,-78 77'], ['#3e3e3e', '-97 80,-92 81,-88 79.500,-94 78.5'], ['#444', '-116 76.5,-108 76.5,-105 75,-115 75'], ['#4a4a4a', '-102 76.5,-98 76.5,-98 75.3,-102 75.500'], ['#484848', '-101 73.5,-97 73.500,-97 71.5,-101 72'], ['#484848', '-96 74,-91 74,-92 72.5'], ['#444', '-95 76.5,-80 75.7,-82 74.6,-92 74.8'], ['#171717', '-87 66,-81 64,-86 63.5'], ['#505050', '-73 78,-66 80,-60 82,-45 82.8,-30 83.6,-20 82,-18 80,-20 77,-19 75,-22 72,-24 70,-32 68,-40 65,-43 60,-48 61,-52 65,-54 69,-55 72,-60 76,-68 76'], ['#181818', '44 -16,49.5 -12,50 -16,47 -25,44 -25,43.500 -21'], ['#333', '12 79.5,25 80,20 77,16 77'], ['#161616', '52 71,56 73.5,68 77,60 75.5,55 73'], ['#171717', '95 80,105 79,102 78.2,96 79'], ['#3c3c3c', '138 76,150 75.3,145 74.7,139 75'], ['#555', '142 54,143.5 50,143 46.5,142 47,142 52'], ['#808080', '141 45.5,145.5 43.5,143 42,140 42'], ['#808080', '141 41.5,142 39,140.5 35.5,136 34,131 34,133 35.5,136.5 37,139.5 39'], ['#777', '130 33.5,132 33,131 31.5'], ['#555', '121.5 25,121 22,120 23.500'], ['#444', '120.5 18.5,122 18,121.5 14,124 13,120 14'], ['#444', '122 7,126 9,126 6,124 6'], ['#555', '109 1.5,113 3,117 7,119 5,118 1,116 -4,111 -3,110 -1'], ['#151515', '110 1,117 1,116 -4,111 -3'], ['#191919', '95.5 5.5,104 -2,106 -5.5,102 -4,98 1'], ['#191919', '105.5 -6.5,114.5 -8,106.5 -7.3'], ['#555', '119.5 0,125 1.5,120.5 .5,123 -4,121 -3,120 -5.5,119 -3'], ['#777', '131 -1,134 -1,138 -2,141 -3,141 -9,138 -8,136 -4.5,132 -3'], ['#555', '141 -3,145 -4.5,148 -7,150.5 -10.5,144 -8,141 -9'], ['#444', '145 -41,148 -41,147 -43.5'], ['#444', '173 -34.5,178 -38,175.5 -41.5,174 -39'], ['#444', '172.5 -41,174 -42,168 -47,167 -45.5'], ['#1b1b1b', '-84.5 22,-80 23,-75 20,-78 20']].forEach(([f, s]) => m += `<path d="${land(s)}" fill="${f}" stroke="#6c6c6c" stroke-width=".8"/>`);
/* graticule */
let g = '';
for (let l = -165; l <= 180; l += 15) g += `M${X(l).toFixed(1)} 105V1012`;
for (let l = -157.5; l < 180; l += 15) g += `M${X(l).toFixed(1)} 420V1016`;
let h = ''; [75, 60, 45, 30, 15, 0, -15, -30, -45].forEach(p => h += `M0 ${Y(p).toFixed(1)}H1912`);
m += `<path d="${g}" stroke="#fff" stroke-opacity=".17" fill="none"/><path d="${h}" stroke="#fff" stroke-opacity=".27" stroke-width="1.400" fill="none"/>`;
/* borders and zone boundaries */
const bord = ['-123 49,-95 49,-88 48,-83 46,-82 42,-76 44,-71 45,-67 47', '-117 32.5,-111 31,-106 31.500,-103 29,-100 28,-97 26', '-70 -4,-70 -11,-69 -17,-66 -22,-62 -22,-58 -20,-58 -17,-60 -14,-65 -10,-70 -11', '-69 -18,-68 -24,-70 -33,-72 -42,-72 -50,-69 -53', '-63 -22,-58 -24,-54 -26,-57 -30,-54 -34', '12 -17,24 -18,28 -16,33 -14,35 -12', '20 -28,20 -18,25 -18,29 -22,25 -26,20 -27', '96 50,107 49,116 50,120 47,112 44,104 42,96 43', '116 50,120 53,127 50,131 48,135 48,131 43', '96 24,100 21,106 23,108 21', '98 17,102 18,105 15,107 11'];
bord.forEach(s => { const p = pts(s), q = []; p.forEach((a, i) => { q.push(a); const b = p[i + 1]; if (b) q.push([(a[0] + b[0]) / 2 + rnd() * 7, (a[1] + b[1]) / 2 + rnd() * 7]); }); m += `<polyline points="${q.map(a => a.join()).join(' ')}" fill="none" stroke="#9a9a9a" stroke-width="1.500"/>`; });
m += `<path d="M144 228V308L160 313 180 340 200 370 230 396M1845 62V175L1887 222 1903 243V266L1835 324 1793 364 1845 398V675H1900M1912 716H1857L1885 754V930L1870 960M14 680H46V658H34V649H67L94 712V727H66V716H0" fill="none" stroke="#b5b5b5" stroke-width="1.700"/>
<path d="M1 52V1026H1910V50H0M57 15V510M24 560V634H57M136 711h29v33h-29zM165 744 181 785 165 803H136M193 794h22v22h-22zM304 810H375V832H304zM460 810H510V868H460zM352 188V106H374V80M1798 356H1902V385H1798M1648 360V450L1806 356M1612 516V642H1646V675M1739 567V682H1805M1170 86V153H1300V100M1490 98 1497 143H1528L1568 118V60M1646 60V118L1590 153V190" fill="none" stroke="#888" stroke-opacity=".5"/>
<path d="M136 711h29v33h-29z" fill="#0c0c0c"/><path d="M852 150V711H810V723H852V867H812V917H852" fill="none" stroke="#c01818" stroke-width="2.200"/>
<path d="M1818 553h56M1874 553l-6-3v6zM1818 585h56M1818 585l6-3v6z" stroke="#bbb" fill="#bbb"/>`;
[[47, 653], [58, 665], [70, 697], [66, 704], [84, 724], [12, 732], [15, 736], [72, 759], [76, 764], [28, 772], [45, 777], [72, 793], [100, 801], [105, 754], [110, 754], [115, 757], [118, 752], [122, 762], [126, 765], [130, 766], [134, 760], [149, 759], [158, 767], [100, 769], [133, 781], [155, 785], [155, 792], [167, 792], [172, 792], [167, 797], [130, 778], [198, 804], [203, 810], [231, 808], [313, 822], [1630, 561], [1659, 564], [1664, 574], [1665, 585], [1664, 597], [1622, 631], [1633, 622], [1655, 636], [1700, 642], [1750, 614], [1770, 612], [1773, 620], [1771, 627], [1590, 644], [1592, 660], [1815, 670], [1818, 680], [1828, 690], [1885, 692], [1890, 698], [1808, 365], [1835, 372], [1860, 372], [1897, 365]].forEach(c => m += `<circle cx="${c[0]}" cy="${c[1]}" r="2.700" fill="#757575"/>`);
/* labels: text, x, baseline, size, width, grey */
const L = [['STANDARD TIME ZONES OF THE WORLD', 6, 83, 25, 375, '#8a8a8a'], ['ARCTIC', 72, 101, 11, 46, '#aaa', 1], ['OCEAN', 145, 101, 11, 51, '#aaa', 1], ['Greenland', 644, 169, 14, 73, '#bbb'], ['(DENMARK)', 655, 184, 8, 48, '#aaa'], ['Greenland Sea', 854, 150, 8, 50, '#999', 1], ['Baffin', 524, 190, 8, 20, '#999', 1], ['Beaufort Sea', 148, 206, 9, 43, '#999', 1], ['U.S.', 82, 263, 11, 20, '#bbb'], ['9', 90, 277, 9, 5, '#ccc'], ['Dawson', 156, 277, 8, 25, '#bbb'], ['Anchorage', 99, 300, 8, 34, '#bbb'], ['Repulse Bay', 394, 256, 8, 38, '#aaa'], ['Hudson', 427, 314, 9, 28, '#999', 1], ['Bay', 433, 323, 8, 12, '#999', 1], ['CANADA', 293, 333, 18, 130, '#c4c4c4'], ['Edmonton', 258, 352, 8, 32, '#ccc'], ['Winnipeg', 345, 386, 8, 30, '#ccc'], ['Québec', 489, 405, 8, 24, '#ccc'], ['Toronto', 462, 425, 8, 23, '#ccc'], ['Chicago', 399, 440, 8, 26, '#ccc'], ['New York', 468, 443, 8, 31, '#ccc'], ['Denver', 309, 450, 8, 23, '#ccc'], ['UNITED STATES', 293, 465, 15, 170, '#d0d0d0'], ['8', 259, 458, 10, 6, '#ccc'], ['7', 316, 479, 10, 6, '#ddd'], ['6', 392, 478, 10, 6, '#ddd'], ['5', 462, 476, 10, 6, '#ccc'], ['Los Angeles', 227, 492, 8, 37, '#ccc'], ['Dallas', 355, 491, 8, 20, '#ccc'], ['NORTH', 72, 454, 11, 53, '#aaa', 1], ['PACIFIC', 69, 480, 11, 58, '#aaa', 1], ['OCEAN', 72, 503, 11, 51, '#aaa', 1], ['Gulf of', 406, 539, 8, 18, '#999', 1], ['MEXICO', 331, 557, 10, 43, '#ddd'], ['Mexico', 342, 573, 8, 22, '#ccc'], ['BELIZE', 424, 584, 7, 20, '#ccc'], ['CUBA', 468, 560, 7, 17, '#ccc'], ['BAHAMAS', 495, 546, 7, 29, '#ccc'], ['GUATEMALA', 383, 595, 7, 34, '#ccc'], ['HONDURAS', 427, 593, 7, 33, '#ccc'], ['Caribbean Sea', 477, 597, 9, 51, '#aaa'], ['EL SALVADOR', 385, 608, 7, 40, '#ccc'], ['NICARAGUA', 433, 610, 7, 33, '#ccc'], ['COSTA', 425, 629, 7, 20, '#ccc'], ['RICA', 429, 636, 7, 14, '#ccc'], ['PANAMA', 456, 629, 7, 25, '#ccc'], ['VENEZUELA', 524, 638, 9, 50, '#ccc'], ['COLOMBIA', 485, 660, 10, 50, '#ddd'], ['ECUADOR', 462, 684, 7, 30, '#ccc'], ['5', 482, 709, 10, 5, '#ccc'], ['4', 564, 719, 10, 5, '#ccc'], ['PERU', 478, 731, 12, 26, '#ddd'], ['Lima', 465, 743, 8, 15, '#ccc'], ['BRAZIL', 585, 742, 16, 75, '#d5d5d5'], ['Brasília', 640, 766, 8, 22, '#ccc'], ['BOLIVIA', 537, 767, 10, 35, '#ddd'], ['PARAGUAY', 570, 802, 8, 37, '#ccc'], ['São Paulo', 614, 802, 8, 31, '#ccc'], ['3', 549, 856, 10, 5, '#ddd'], ['URUGUAY', 584, 857, 7, 28, '#ddd'], ['Buenos Aires', 540, 868, 8, 41, '#ddd'], ['ARGENTINA', 527, 880, 10, 58, '#ddd'], ['CHILE', 480, 894, 11, 29, '#ddd'], ['U.S.', 64, 557, 9, 16, '#ccc'], ['HAWAIIAN', 25, 571, 8, 34, '#ccc', 1], ['ISLANDS', 27, 579, 8, 28, '#ccc', 1], ['10', 73, 584, 9, 10, '#ccc'], ['KIRIBATI', 19, 690, 9, 48, '#ccc'], ['GALAPAGOS', 381, 688, 7, 31, '#bbb', 1], ['ISLANDS', 385, 695, 7, 23, '#bbb', 1], ['(ECUADOR)', 385, 702, 6, 24, '#bbb'], ['ÎLES MARQUISES', 168, 726, 8, 53, '#ccc', 1], ['(French Polynesia)', 168, 733, 7, 51, '#ccc'], ['SOUTH  PACIFIC', 230, 747, 12, 125, '#bbb', 1], ['OCEAN', 268, 773, 12, 50, '#bbb', 1], ['Cook Islands', 12, 747, 7, 36, '#bbb'], ['10', 82, 750, 9, 10, '#ccc'], ['French Polynesia', 57, 782, 11, 115, '#ccc'], ['(FRANCE)', 88, 791, 8, 33, '#ccc'], ['Pitcairn Islands', 194, 800, 7, 44, '#ccc'], ['Easter Island', 320, 822, 7, 30, '#bbb', 1], ['ARCHIPIÉLAGO', 468, 850, 7, 38, '#bbb', 1], ['JUAN FERNÁNDEZ', 462, 856, 7, 47, '#bbb', 1], ['Scale 1:85,000,000 at 0°', 37, 910, 13, 143, '#ccc'], ['Miller Cylindrical Projection', 43, 925, 12, 134, '#ccc', 1], ['0    500    1000 Kilometers', 53, 943, 8, 93, '#bbb'], ['0       500       1000 Miles', 53, 962, 8, 105, '#bbb'], ['Boundary representation is not necessarily authoritative.', 20, 980, 8, 178, '#bbb'], ['Falkland Islands', 560, 951, 8, 46, '#bbb'], ['(administered by U.K.', 552, 964, 8, 60, '#bbb'], ['claimed by ARGENTINA)', 550, 970, 7, 67, '#bbb'], ['South Georgia and the', 700, 974, 8, 64, '#bbb'], ['South Sandwich Islands', 699, 981, 8, 67, '#bbb'], ['claimed by ARGENTINA)', 699, 994, 7, 67, '#bbb'], ['SOUTH', 782, 778, 12, 52, '#bbb', 1], ['ATLANTIC', 768, 806, 12, 79, '#bbb', 1], ['OCEAN', 783, 833, 12, 51, '#bbb', 1], ['Ascension (St. Helena)', 820, 719, 8, 63, '#ccc'], ['St. Helena', 862, 769, 8, 30, '#ccc', 1], ['St. Helena', 855, 822, 9, 37, '#ccc'], ['(U.K.)', 864, 829, 7, 16, '#ccc'], ['TRISTAN DA CUNHA', 830, 879, 8, 64, '#ccc', 1], ['(St. Helena)', 845, 887, 8, 33, '#ccc'], ['Gough Island', 845, 901, 8, 38, '#ccc', 1], ['Coordinated Universal Time (UTC)', 814, 940, 12, 175, '#bbb'], ['formerly', 875, 954, 11, 39, '#bbb'], ['Greenwich Mean Time (GMT)', 834, 967, 11, 130, '#bbb'], ['Sun', 884, 986, 9, 15, '#aaa'], ['12:00', 880, 995, 9, 21, '#aaa'], ['OF THE CONGO', 977, 698, 9, 72, '#bbb'], ['BURUNDI', 1053, 700, 8, 26, '#bbb'], ['TANZANIA', 1060, 714, 9, 35, '#ccc'], ['SEYCHELLES', 1159, 725, 8, 37, '#ccc'], ['ANGOLA', 970, 743, 10, 36, '#ddd'], ['ZAMBIA', 1026, 753, 9, 27, '#ccc'], ['MALAWI', 1068, 748, 8, 24, '#ccc'], ['COMOROS', 1123, 740, 8, 30, '#ccc'], ['MOZAMBIQUE', 1069, 774, 9, 49, '#ccc'], ['ZIMBABWE', 1033, 780, 8, 31, '#ccc'], ['NAMIBIA', 966, 792, 9, 30, '#ccc'], ['BOTSWANA', 1003, 799, 8, 33, '#ccc'], ['MADAGASCAR', 1113, 797, 9, 50, '#ccc'], ['MAURITIUS', 1201, 779, 8, 31, '#ccc'], ['Réunion', 1179, 797, 8, 23, '#ccc'], ['(FRANCE)', 1177, 804, 7, 26, '#ccc'], ['SOUTH', 1003, 837, 10, 29, '#ddd'], ['AFRICA', 1003, 847, 10, 31, '#ddd'], ['SWAZILAND', 1055, 830, 7, 33, '#ccc'], ['LESOTHO', 1044, 845, 8, 27, '#ccc'], ['3', 1145, 820, 10, 5, '#ccc'], ['INDIAN', 1296, 795, 12, 54, '#bbb', 1], ['OCEAN', 1294, 822, 12, 49, '#bbb', 1], ['British Indian', 1285, 708, 8, 38, '#ccc'], ['Ocean Territory', 1281, 714, 8, 44, '#ccc'], ['Cocos', 1372, 729, 8, 18, '#ccc'], ['(Keeling) Islands', 1358, 735, 8, 46, '#ccc'], ['French Southern and Antarctic Lands', 1163, 919, 12, 157, '#bbb'], ['(FRANCE)', 1217, 928, 9, 33, '#bbb'], ['PRINCE EDWARD', 1095, 941, 7, 44, '#aaa', 1], ['ISLANDS', 1105, 947, 7, 22, '#aaa', 1], ['ÎLES CROZET', 1182, 945, 9, 42, '#aaa', 1], ['ÎLES KERGUELEN', 1270, 957, 9, 55, '#aaa', 1], ['Perth', 1506, 851, 8, 16, '#ccc'], ['AUSTRALIA', 1549, 833, 15, 117, '#d0d0d0'], ['Alice Springs', 1580, 800, 8, 42, '#bbb'], ['Sydney', 1670, 868, 8, 22, '#ccc'], ['Great Australian', 1569, 877, 8, 41, '#aaa', 1], ['Tasman', 1729, 898, 8, 26, '#aaa', 1], ['NEW', 1834, 911, 10, 26, '#aaa'], ['ZEALAND', 1824, 923, 10, 40, '#aaa'], ['INDONESIA', 1471, 708, 14, 140, '#ccc'], ['MALAYSIA', 1434, 674, 9, 53, '#ccc'], ['BRUNEI', 1493, 646, 7, 21, '#ccc'], ['SINGAPORE', 1443, 689, 6, 26, '#ccc'], ['PAPUA', 1657, 706, 8, 22, '#ccc'], ['NEW GUINEA', 1645, 715, 8, 46, '#ccc'], ['SOLOMON', 1735, 709, 8, 30, '#ccc'], ['ISLANDS', 1737, 716, 8, 25, '#ccc'], ['EAST', 1556, 729, 7, 16, '#ccc'], ['TIMOR', 1555, 736, 7, 18, '#ccc'], ['Coral', 1714, 785, 9, 20, '#bbb', 1], ['Sea', 1719, 797, 8, 11, '#bbb', 1], ['VANUATU', 1750, 787, 7, 26, '#ccc'], ['FIJI', 1821, 785, 8, 10, '#ccc'], ['TONGA', 1861, 809, 8, 20, '#ccc'], ['TUVALU', 1819, 749, 7, 23, '#ccc'], ['SAMOA', 1886, 764, 7, 20, '#ccc'], ['Tokelau', 1885, 733, 7, 23, '#ccc'], ['KIRIBATI', 1838, 704, 9, 64, '#ccc'], ['NAURU', 1766, 697, 7, 21, '#ccc'], ['MARSHALL', 1796, 649, 7, 30, '#ccc'], ['ISLANDS', 1799, 659, 7, 24, '#ccc'], ['PALAU', 1585, 659, 7, 18, '#ccc'], ['FEDERATED STATES OF MICRONESIA', 1624, 644, 7, 104, '#ccc'], ['PHILIPPINES', 1504, 628, 10, 60, '#ccc'], ['Manila', 1534, 610, 8, 22, '#ccc'], ['Philippine', 1574, 588, 9, 35, '#aaa', 1], ['Sea', 1585, 602, 8, 11, '#aaa', 1], ['Northern', 1630, 590, 7, 25, '#ccc'], ['Mariana', 1632, 596, 7, 22, '#ccc'], ['Islands', 1634, 602, 7, 19, '#ccc'], ['Guam', 1660, 622, 7, 17, '#ccc'], ['10', 1681, 595, 10, 9, '#ccc'], ['11', 1717, 674, 10, 7, '#ccc'], ['12', 1775, 674, 10, 10, '#ccc'], ['THAILAND', 1418, 607, 7, 29, '#ddd'], ['VIETNAM', 1463, 616, 8, 32, '#ccc'], ['CAMBODIA', 1438, 623, 7, 31, '#ddd'], ['LAOS', 1427, 582, 7, 14, '#ddd'], ['Hong Kong S.A.R.', 1499, 573, 8, 50, '#ccc'], ['Macau S.A.R.', 1490, 579, 8, 36, '#ccc'], ['Eastward across Date Line', 1797, 548, 9, 97, '#ccc'], ['subtract 24 hours', 1823, 560, 7, 45, '#bbb'], ['Westward across Date Line', 1797, 581, 9, 98, '#ccc'], ['add 24 hours', 1828, 592, 7, 34, '#bbb'], ['Johnston', 1880, 561, 7, 26, '#bbb'], ['USSIA', 1405, 291, 17, 98, '#ccc'], ['9', 1531, 277, 9, 6, '#ddd'], ['10', 1615, 300, 10, 10, '#ddd'], ['12', 1794, 269, 10, 11, '#ccc'], ['11', 1683, 262, 9, 6, '#ccc'], ['8', 1455, 340, 10, 6, '#ccc'], ['9', 1896, 300, 9, 5, '#ccc'], ['Yakutsk', 1553, 289, 8, 24, '#ccc'], ['Magadan', 1689, 309, 8, 28, '#ddd'], ['Bering Sea', 1824, 331, 9, 36, '#aaa', 1], ['Lake Baikal', 1430, 360, 7, 29, '#bbb', 1], ['Sea', 1679, 358, 7, 10, '#aaa', 1], ['of', 1682, 366, 7, 6, '#aaa', 1], ['Okhotsk', 1672, 374, 8, 25, '#aaa', 1], ['Petropavlovsk-', 1733, 369, 8, 45, '#ccc'], ['Kamchatskiy', 1733, 375, 8, 40, '#ccc'], ['U.S.  10', 1839, 368, 9, 28, '#ccc'], ['ALEUTIAN  ISLANDS', 1817, 384, 7, 64, '#bbb', 1], ['occupied by the SOVIET UNION in 1945,', 1694, 426, 8, 113, '#ccc'], ['administered by RUSSIA, claimed by JAPAN', 1690, 432, 7, 122, '#ccc'], ['MONGOLIA', 1421, 413, 10, 56, '#d5d5d5'], ['10', 1653, 404, 9, 10, '#ddd'], ['Sakhalin', 1655, 384, 7, 20, '#ccc'], ['Vladivostok', 1591, 436, 8, 36, '#ccc'], ['Beijing', 1485, 457, 8, 22, '#ddd'], ['NORTH', 1560, 459, 7, 20, '#ddd'], ['KOREA', 1560, 465, 7, 20, '#ddd'], ['SOUTH', 1561, 483, 7, 20, '#ddd'], ['KOREA', 1561, 489, 7, 20, '#ddd'], ['Sea of', 1598, 464, 7, 15, '#aaa', 1], ['Japan', 1597, 471, 7, 14, '#aaa', 1], ['JAPAN', 1616, 480, 8, 25, '#ddd'], ['Tokyo', 1612, 490, 8, 19, '#ddd'], ['9', 1624, 512, 10, 6, '#ccc'], ['CHINA', 1405, 494, 15, 65, '#d5d5d5'], ['8', 1434, 512, 10, 6, '#ddd'], ['Shanghai', 1504, 518, 8, 30, '#ddd'], ['NORTH', 1741, 454, 11, 53, '#bbb', 1], ['PACIFIC', 1737, 481, 11, 58, '#bbb', 1], ['OCEAN', 1741, 507, 11, 49, '#bbb', 1], ['ARCTIC  OCEAN', 1579, 108, 11, 109, '#aaa', 1], ['SEVERNAYA', 1425, 113, 8, 39, '#aaa', 1], ['ZEMLYA', 1430, 120, 8, 25, '#aaa', 1], ['FRANZ JOSEF', 1168, 129, 8, 42, '#aaa', 1], ['LAND', 1176, 136, 8, 18, '#aaa', 1], ['Kara Sea', 1294, 143, 8, 30, '#999', 1], ['Laptev Sea', 1512, 156, 8, 35, '#999', 1], ['NEW SIBERIAN ISLANDS', 1592, 160, 8, 77, '#aaa', 1], ['Barents Sea', 1069, 185, 8, 39, '#999', 1], ['East Siberian Sea', 1718, 193, 9, 57, '#999', 1], ['NOVAYA', 1207, 187, 8, 26, '#aaa', 1], ['Svalbard', 960, 109, 8, 27, '#aaa'], ['Wrangel', 1824, 203, 7, 20, '#999', 1], ['Chukchi', 1867, 231, 8, 26, '#999', 1]];
L.forEach(t => m += `<text x="${t[1]}" y="${t[2]}" font-size="${t[3]}" fill="${t[5]}" fill-opacity=".85" textLength="${t[4]}"${t[4] < t[0].length * t[3] * .55 ? ' lengthAdjust="spacingAndGlyphs"' : ''}${t[6] ? ' font-style="italic"' : ''}>${t[0]}</text>`);
for (let i = -11; i <= 12; i++) { const x = X(i * 15); m += `<g text-anchor="middle" fill="#aaa"><text x="${x}" y="76" font-size="12" fill-opacity=".7">${Math.abs(i)}</text><text x="${x}" y="62" font-size="8" fill-opacity=".6">${Math.abs(i) * 15}</text><text x="${x}" y="1010" font-size="11">${i + 12}:00</text><text x="${x}" y="1021" font-size="11">${Math.abs(i)}</text></g>`; }
m += `<text transform="translate(1842 510) rotate(-90)" font-size="9" fill="#ccc" textLength="92" style="font-family:'Liberation Sans'">International Date Line</text><text transform="translate(1883 912) rotate(-90)" font-size="9" fill="#aaa" textLength="92" style="font-family:'Liberation Sans'">International Date Line</text>
<rect width="1920" height="1040" fill="url(#shade)"/><rect width="1920" height="26" fill="#000"/><rect y="1027" width="1920" height="13" fill="#050505"/>`;
$('wall').innerHTML = m;

/* ---------- desktop shortcuts: column, row, label, artwork (29x29) ---------- */
const tx = (x, y, s, f, t, w = 700) => `<text x="${x}" y="${y}" font-size="${s}" font-weight="${w}" fill="${f}" text-anchor="middle">${t}</text>`;
const box = f => `<rect width="29" height="29" fill="${f}"/>`, cir = (f, e = '') => `<circle cx="14.500" cy="14.500" r="14" fill="${f}" ${e}/>`;
const sc = [
[1,1,'GeForce<br>Experience', box('#1c1c1c') + '<path fill="#76b900" d="M12 7h12v15H12q-6-1-9-8 3-6 9-7z"/><path d="M4 14q5-6 10-4 4 2 3 6-4 4-8 0 0-3 4-3M12 7v3M12 22q8 0 10-8" fill="none" stroke="#1c1c1c" stroke-width="1.500"/>'],
[2,1,'OBS Studio', cir('#26272b', 'stroke="#ccc" stroke-width="1.500"') + '<path d="M12 4q-3 6 3 11 6-5 10 0M15 15q0 7-8 8M15 15q-6-2-9 3" fill="none" stroke="#d8d8d8" stroke-width="2.500"/>'],
[1,2,'PDFsam<br>Basic', cir('#fff') + '<circle cx="14.500" cy="14.500" r="10" fill="none" stroke="#1d9e4e" stroke-width="6" stroke-dasharray="19 2"/><path d="m14 9 5 9h-8z" fill="#f39c12"/>'],
[2,2,'Matlab', '<path d="m1 17 8-4 5-7 5 9-8 9z" fill="#3a7fc1"/><path d="M9 20q6-4 10-18 4 8 8 21-5-3-8-1-4 3-6 5z" fill="#d9541a"/><path d="M19 2q2 8 0 20l-5 4q3-12 5-24z" fill="#f4a62a"/>'],
[1,3,'LTspice', '<path d="M0 0h27l-8 16H2z" fill="#1a0505"/><path d="M6 2v10h6M15 2h10l-4 12h-4l3-9h-6z" fill="none" stroke="#8f0f18" stroke-width="3.500"/>'],
[2,3,'SQLiteStudi...', '<path d="M4 4q10-6 21 0v21q-10 6-21 0z" fill="#aab3c4"/><path d="M4 5q10 6 21 0M4 12q10 5 21 0M4 19q10 5 21 0" stroke="#e8ecf3" fill="none" stroke-width="1.500"/><path d="M10 24q2-10 9-14-1 9-8 11" fill="#6d7587"/>'],
[1,4,'GeoGebra', box('#fff') + '<ellipse cx="14.500" cy="14.500" rx="9.500" ry="8.500" fill="none" stroke="#333" stroke-width="1.600"/><g fill="#9a9aff" stroke="#333"><circle cx="14" cy="5" r="2.700"/><circle cx="24" cy="11" r="2.700"/><circle cx="21" cy="22" r="2.700"/><circle cx="5" cy="12" r="2.700"/></g>'],
[2,4,'sharedown', '<path d="M5 7q0-2 2-2h14q3 0 3 3v8H14v5H7q-2 0-2-2z" fill="#f2f2f2"/><path d="M18 12h5v9h4l-6.500 7-6.500-7h4z" fill="#2fa84f"/>'],
[1,5,'StarUML', '<path d="m14 0 4 10 10 1-8 7 2 10-8-6-8 6 2-10-8-7 10-1z" fill="#f4b41a"/><path d="m14 0 4 10-4 5zM0 11l10-1 4 5z" fill="#f26a5a"/><path d="m28 11-8 7-6-3z" fill="#d8394a"/><path d="m14 15 8 13-8-6z" fill="#6633a8"/>'],
[2,5,'Godot', '<path d="M3 6 7 3l3 3V1h9v5l3-3 4 3v15q-5 6-11.500 6T3 21z" fill="#478cbf"/><circle cx="9" cy="14" r="3" fill="#fff"/><circle cx="20" cy="14" r="3" fill="#fff"/><circle cx="9.500" cy="14" r="1.500" fill="#333"/><circle cx="19.500" cy="14" r="1.500" fill="#333"/><path d="M5 20h19" stroke="#fff" stroke-dasharray="3 2"/>'],
[1,6,'Arduino', cir('#12959b') + '<path d="M14.500 14.500q-7-7-9 0 2 7 9 0 7-7 9 0-2 7-9 0z" fill="none" stroke="#fff" stroke-width="2.200"/>'],
[2,6,'BaseX', box('#fff') + '<path d="m6 2 17 24M23 2 6 26" stroke="#ccc" stroke-width="4"/>' + tx(14.5, 17.5, 9, '#c8102e', 'BASE')],
[25,1,'DEGIRO', '<rect width="29" height="29" rx="2" fill="#fff"/><path fill="#0a8fd2" d="M5 9h19v5H5zM5 15.500h19v4H5z"/>'],
[16,12,'rust', box('#cd412b') + '<path fill="#2b2220" d="M13 4h6l-1 7h-4zM3 14l7 2v5l-7 2zM13 14h6v6h-6zM20 19l7 4-4 4-5-6z"/>'],
[17,12,'GTA5', '<path d="m0 5 8-1 6 14 6-14 9-1-10 22h-9z" fill="#7c8f68"/><path d="m8 4 6 18 7-18" stroke="#e8e8e0" fill="none" stroke-width="2"/>' + tx(14.5, 14, 6, '#fff', 'GTA')],
[18,12,'Sea of<br>Thieves', '<path d="M14 1q14-1 13 12-1 6-5 7l-1 6-7 1-3-5q-7-2-8-9Q3 2 14 1z" fill="#21d38f"/><path d="M8 9q5-2 6 3-4 3-7 0zM17 11l6-2-1 6-4-1zM9 19l10-1" fill="#0c3b2c" stroke="#0c3b2c"/>'],
[19,12,"Assassin's<br>Creed V...", '<path d="M14.500 1q3 8 9 17-5-3-9-3t-9 3q6-9 9-17zM5 20q9-5 19 0" fill="none" stroke="#3d9384" stroke-width="1.600"/>' + tx(18, 29, 4.5, '#3d9384', 'HALLA')],
[20,12,'Rockstar<br>Games', '<rect y="1" width="28" height="27" rx="4" fill="#fcaf17"/>' + tx(12, 19, 17, '#111', 'R') + '<path d="m19 14 1.500 3.500h4L21.500 20l1 4-3.500-2.500-3.500 2.500 1-4-3-2.500h4z" fill="#fff" stroke="#111" stroke-width=".7"/>'],
[21,12,'Origin', '<path d="M18 0q-3 3-3 4 10 1 9 12-1 8-10 13 2-3 2-4Q4 24 5 13 6 4 18 0z" fill="#f05a22"/><circle cx="14.800" cy="14.500" r="4.300" fill="#111"/>'],
[22,12,'Ubisoft<br>Connect', cir('url(#gub)') + '<circle cx="15" cy="15" r="9" fill="none" stroke="#fff" stroke-width="2"/><circle cx="16" cy="16" r="5.500" fill="none" stroke="#fff" stroke-width="2"/><circle cx="16.500" cy="16.500" r="2.200" fill="#fff"/>'],
[23,12,'Steam', cir('url(#gst)') + '<circle cx="19" cy="10" r="4" fill="none" stroke="#fff" stroke-width="2.400"/><path d="m2 15 9 4 6-6" stroke="#fff" stroke-width="3.500" fill="none"/><circle cx="11" cy="20" r="3" fill="#fff"/>'],
[24,12,'Epic Games', '<path d="M2 0h25v23l-12.500 6L2 23z" fill="#151515"/>' + tx(14.5, 13, 10.5, '#fff', 'EPIC') + tx(14.5, 20, 5, '#fff', 'GAMES')],
[25,12,'Discord', '<use href="#t-disc" width="29" height="29"/>'],
[16,13,'wiiU', box('#faf7ef') + '<path d="M5 7h17L7 22h17M3 13l22-2M10 4l10 20" fill="none" stroke="#c9a75c" stroke-width="1.800"/>'],
[17,13,'Prison<br>Architect', '<path d="M4 1h15l6 7v20H4z" fill="#fafafa"/><path d="M19 1v7h6" fill="#ddd" stroke="#999"/>'],
[18,13,'DS4', '<path d="M3 5q11-3 23 0 3 8 3 18-4 3-6-4H8q-3 7-7 4 0-10 2-18z" fill="#3b3b3e"/><circle cx="7" cy="10" r="2.500" fill="#666"/><circle cx="21" cy="7.500" r="1.300" fill="#fd0"/><circle cx="24" cy="10" r="1.300" fill="#e33"/><circle cx="18.500" cy="10" r="1.300" fill="#3af"/><circle cx="21" cy="12.500" r="1.300" fill="#3c3"/>'],
[19,13,'Rocket<br>League®', '<path d="M3 3q12-4 24 0 1 18-12 25Q2 20 3 3z" fill="#1565c0" stroke="#fff" stroke-width="1.500"/><circle cx="5" cy="5" r="4.500" fill="#ccc"/><path d="m6 15 12-8 5 2-4 8-6 5z" fill="#fff"/>'],
[20,13,'Borderlands 2', cir('#5c1608', 'stroke="#e0821a" stroke-width="1.500"') + '<path d="m5 22 9-18h6l-3 8 7 1-6 13z" fill="#f6b61c"/>' + tx(15, 21, 15, '#5a1206', '2')],
[21,13,'Call of Duty<br>Modern ...', box('#000') + '<path d="M2 19v-8l6 6 6-6v8M14 11l4 8 3-6 2 6 4-8" fill="none" stroke="#fff" stroke-width="2.200"/>'],
[22,13,'Far Cry 3', box('#0f4250') + '<path d="M3 6h22v4H3z" fill="#3ba5ad" opacity=".5"/>' + tx(14.5, 20, 13, '#d5f0f2', 'FC3')],
[23,13,'Battlefield 4', box('#2c3142') + '<path d="M0 0h7l-3 29H0z" fill="#e8e8ef"/><path d="M10 5q6-4 9 1v9l8 8v6H7z" fill="#0f1118"/><path d="m11 8 6 0v7l-4 2z" fill="#8f7d77"/>'],
[24,13,'Fortnite', box('#3fb2ef') + '<path d="M0 0h29L10 29H0z" fill="#2b93e0" opacity=".5"/>' + tx(14.5, 21, 18, '#fff', 'F')],
[25,13,'CS-GO', box('url(#gcs)') + '<path d="M5 8h12v2H9v3l1 3-3 8H4l2-8z" fill="#1b1710"/><circle cx="7" cy="6" r="2" fill="#1b1710"/>' + tx(19, 20, 9.5, '#2a2210', 'GO')]];
$('icons').innerHTML = sc.map(s => `<div class="shortcut text-center d-flex flex-column align-items-center" style="grid-column:${s[0]};grid-row:${s[1]};height:0"><div class="tile position-relative"><svg width="29" height="29">${s[3]}</svg><svg class="arrow position-absolute" width="10" height="10"><use href="#lnk"/></svg></div><div>${s[2]}</div></div>`).join('');

/* ---------- taskbars ---------- */
const apps = ['win', 'search', 'fox', 'ubu', 'exp', 'mail', 'vs', 'git', 'circ', 'teams', 'disc', 'word', 'xl', 'one', 'spot'];
document.querySelectorAll('[data-tasks]').forEach(e => { const z = +e.dataset.tasks; e.innerHTML = apps.map((a, i) => `<div class="slot position-relative d-flex align-items-center justify-content-center ${i == 2 ? 'slot-on' : ''}"><svg width="${z}" height="${z}"><use href="#t-${a}"/></svg>${i == 2 ? '<span class="ind position-absolute" style="width:16px;background:#4cc2ff"></span>' : i == 4 ? '<span class="ind position-absolute" style="width:6px;background:#9b9b9b"></span>' : ''}</div>`).join(''); });

/* ---------- explorer ---------- */
const ic = (w, d, x = '') => `<svg width="${w}" height="16" viewBox="0 0 16 16" fill="none" stroke="#5f5f5f" stroke-width="1.200" ${x}>${d}</svg>`;
const sp = n => `<span style="width:${n}px;flex:none"></span>`, ch = (n, c, z = 10) => `<svg width="${z}" height="${z}" color="${c}"><use href="#${n}"/></svg>`;
const vl = h => `<span class="vline" style="height:${h}px"></span>`;
$('tools').innerHTML = sp(19) + ic(16, '<circle cx="8" cy="8" r="7" stroke="#ddd"/><path d="M8 4.500v7M4.500 8h7" stroke="#4cc2ff"/>') + sp(9) + '<span data-w="37">Nuovo</span>' + sp(3) + ch('chd', '#aaa') + sp(15) + vl(32) + sp(18)
 + ic(16, '<path d="m4 1 6 10M12 1 6 11"/><circle cx="4.500" cy="13" r="2" stroke="#27566e"/><circle cx="11.500" cy="13" r="2" stroke="#27566e"/>') + sp(32)
 + ic(16, '<rect x="4.500" y="1" width="8" height="12" rx="1.500" stroke="#27566e"/><path d="M2.500 3.500V13q0 2 2 2H11"/>') + sp(32)
 + ic(16, '<path d="M7 15H3.500q-1 0-1-1V3q0-1 1-1H12q1 0 1 1v1M5.500 1h5v2h-5z" stroke="#ddd"/><rect x="8.500" y="6" width="6" height="9" rx="1" stroke="#4cc2ff"/>') + sp(32)
 + ic(16, '<path d="M7.500 3.500H2q-1 0-1 1V12q0 1 1 1h5.500M12 3.500h2q1 0 1 1V12q0 1-1 1h-2M4 8h3"/><path d="M10 1v14M8.500 1h3M8.500 15h3" stroke="#27566e"/>') + sp(32)
 + ic(16, '<path d="M6 3H3Q2 3 2 4v10q0 1 1 1h9q1 0 1-1v-2"/><path d="M9.500 2v3Q5 5 5 11q2-3 4.500-3v3L14.500 6.500z" stroke="#27566e"/>') + sp(32)
 + ic(16, '<path d="M2 3.500h12M6 3q0-2 2-2t2 2M3.500 3.500l.8 11q0 .5.500.5h6.500q.5 0 .5-.5l.8-11M6.500 6.500v5M9.500 6.500v5"/>') + sp(18) + vl(32) + sp(16)
 + ic(16, '<path d="M4.500 15V1.500M1 5l3.500-3.500L8 5" stroke="#ddd"/><path d="M11.500 1v13.500M8 11l3.500 3.500L15 11" stroke="#4cc2ff"/>') + sp(8) + '<span data-w="37">Ordina</span>' + sp(4) + ch('chd', '#aaa') + sp(26)
 + ic(16, '<path d="M0 3h16M0 6.300h16M0 9.600h16M0 13h16" stroke="#eee"/>') + sp(9) + '<span data-w="53">Visualizza</span>' + sp(4) + ch('chd', '#aaa') + sp(15) + vl(32) + sp(16)
 + '<svg width="16" height="4"><g fill="#fff"><circle cx="2" cy="2" r="1.600"/><circle cx="8" cy="2" r="1.600"/><circle cx="14" cy="2" r="1.600"/></g></svg>';
$('wnav').innerHTML = sp(15) + ch('arl', '#fff', 12) + sp(23) + `<svg width="12" height="12" viewBox="0 0 12 12"><path d="M0 6h11M6.500 1.500 11 6l-4.500 4.500" stroke="#fff" stroke-width="1.400" fill="none"/></svg>` + sp(20) + ch('chd', '#fff', 11) + sp(16)
 + `<svg width="12" height="13" viewBox="0 0 12 13"><path d="M6 13V1M1.500 5.500 6 1l4.500 4.500" stroke="#fff" stroke-width="1.400" fill="none"/></svg>` + sp(16)
 + `<div class="fbox d-flex align-items-center" style="width:262px;flex:none">${sp(8)}<svg width="15" height="14"><use href="#fold"/></svg>${sp(6)}<span style="color:#8a8a8a" data-w="8">«</span>${sp(5)}<span data-w="35">github</span>${sp(5)}${ch('chr', '#fff', 9)}${sp(10)}<span data-w="49">tcm_ho...</span><span class="ms-auto"></span>${ch('chd', '#ddd')}${sp(21)}${ch('rel', '#ddd', 13)}${sp(10)}</div>`
 + sp(12) + `<div class="fbox d-flex align-items-center" style="width:433px;color:#7c7c7c">${sp(15)}<svg width="12" height="12" viewBox="0 0 12 12"><circle cx="7.500" cy="4.500" r="3.800" fill="none" stroke="#777"/><path d="M4.800 7.500 1 11.500" stroke="#777"/></svg>${sp(13)}<span data-w="201">Cerca in tcm_homeworks_and_project</span></div>`;
const pcs = {
 pc: '<rect y="1" width="16" height="11" rx="1" fill="url(#gd)"/><path d="M6 12h4v2h2v1H4v-1h2z" fill="#7b8794"/>',
 desk: '<rect y="1.500" width="16" height="13" rx="1" fill="url(#gd)"/><path d="M2 4h1.500M2 6.500h1.500" stroke="#fff" stroke-width="1.300"/>',
 doc: '<rect x="1.500" width="13" height="16" rx="1" fill="#8ba6c1"/><path d="M4 5.500h8M4 8h8M4 10.500h5" stroke="#fff"/>',
 dl: '<path d="M8 0v11M3 6.500l5 5 5-5M2.500 15h11" stroke="#1fb58f" stroke-width="1.700" fill="none"/>',
 img: '<rect x="1" y="1" width="14" height="14" rx="1" fill="#1479d4"/><path d="m2 15 6-8 6 8z" fill="#fff"/><circle cx="11.500" cy="4.500" r="1.500" fill="#fff"/>',
 mus: '<circle cx="8" cy="8" r="8" fill="url(#gm)"/><path d="M8.500 11V4l2.500 1.500" stroke="#fff" fill="none" stroke-width="1.200"/><circle cx="7.200" cy="11" r="1.600" fill="#fff"/>',
 vid: '<rect x="1" width="14" height="16" rx="1" fill="#8b48dc"/><path d="M6 5v6l5-3z" fill="#fff"/><path d="M2.500 1v14M13.500 1v14" stroke="#5a1ea6" stroke-dasharray="1.500 1.500"/>',
 win: '<path d="M1 8q7-3 14 0l1 2v5H0v-5z" fill="#c8c8c8"/><path d="M0 10h16v4.500H0z" fill="#555"/><path d="M1 1h2.500v2.500H1zM4.500 1H7v2.500H4.500zM1 4.500h2.500V7H1zM4.500 4.500H7V7H4.500z" fill="#2ea7f2"/><path d="M2 12.500h2" stroke="#4d4"/>',
 hdd: '<path d="m3 4 10 0 3 5H0z" fill="#d5d5d5"/><path d="M0 8.500h16v4.500H0z" fill="#555"/><path d="M2 11h2" stroke="#4f4"/>',
 net: '<rect x="4" y="5" width="12" height="8" rx="1" fill="url(#gd)"/><circle cx="5" cy="4.500" r="4.500" fill="#6fb3d8"/><path d="M9 13h2v3H9z" fill="#7b8794"/>' };
$('side').innerHTML = '<div style="height:10px"></div>' + [['pc', 'Questo PC', 56], ['desk', 'Desktop', 43], ['doc', 'Documenti', 59], ['dl', 'Download', 54], ['img', 'Immagini', 51], ['mus', 'Musica', 38], ['vid', 'Video', 30], ['win', 'Windows (C:)', 71], ['hdd', 'HDD (D:)', 47], ['net', 'Rete', 23]].map((r, i) => { const root = i == 0 || i == 9;
 return `<div class="side-row d-flex align-items-center"${i == 9 ? ' style="margin-top:8px"' : ''}><div class="d-flex align-items-center ${i == 8 ? 'side-on' : ''}" style="height:27px;width:153px;margin-left:2px">${sp(root ? 7 : 15)}${ch(i ? 'chr' : 'chd', i ? '#888' : '#ddd')}${sp(11)}<svg width="15" height="15" viewBox="0 0 16 16">${pcs[r[0]]}</svg>${sp(6)}<span data-w="${r[2]}">${r[1]}</span></div></div>`; }).join('') + '<div class="thumb position-absolute" style="left:164px;top:158px;height:140px"></div>';
const fl = [['.git', 17, '03/05/2022 18:38'], ['.vscode', 40, '02/05/2022 23:43'], ['Event_Simulation', 91, '03/05/2022 18:37'], ['GreekLambda', 73, '02/05/2022 11:29'], ['MatiasLambdaGet', 96, '02/05/2022 23:43'], ['packages', 49, '28/04/2022 17:53'], ['readerApp', 55, '30/04/2022 23:43'], ['s3_to_jason_lambda', 105, '02/05/2022 10:27'], ['testApp', 41, '02/05/2022 23:43'], ['uploaderApp', 69, '02/05/2022 10:17']];
$('files').innerHTML = `<div class="fhead d-flex"><div class="d-flex border-0" style="width:273px;padding-left:32px"><span data-w="33">Nome</span><svg width="9" height="6" style="margin:1px 0 0 80px"><path d="m.5 5 4-4 4 4" stroke="#aaa" fill="none"/></svg></div><div class="c-date"><span data-w="85">Ultima modifica</span></div><div class="c-type"><span data-w="22">Tipo</span></div><div style="width:81px"><span data-w="63">Dimensione</span></div><div></div></div><div style="height:4px"></div>`
 + fl.map((f, i) => `<div class="frow d-flex align-items-center" style="padding-left:20px"><svg width="15" height="14" ${i ? '' : 'opacity=".55"'}><use href="#fold"/></svg><span class="c-name" style="padding-left:5px"><span data-w="${f[1]}">${f[0]}</span></span>${sp(5)}<span class="c-date"><span data-w="88" style="color:#d5d5d5">${f[2]}</span></span><span data-w="72" style="color:#e6e6e6">Cartella di file</span></div>`).join('') + '<div class="thumb position-absolute" style="right:8px;top:17px;height:177px"></div>';

/* ---------- bookmarks ---------- */
const r20 = (f, x) => `<rect width="20" height="20" rx="1" fill="${f}"/>${x}`, bf = '<use href="#bfold"/>';
$('marks').innerHTML = [
 ['<rect y="3" width="20" height="14" rx="4" fill="#f00"/><path d="M8 7v6l5-3z" fill="#fff"/>', 'YouTube', 57],
 ['<rect width="20" height="20" rx="4" fill="#fff"/>' + tx(10, 14, 16, '#111', 'a') + '<path d="M3 14.500q7 5 13 0" stroke="#f90" stroke-width="1.800" fill="none"/>', 'Amazon.it', 67],
 [bf, 'Banche e pagamenti', 136], [bf, 'Matched betting', 109], [bf, 'emulation', 67], [bf, 'Esami da dare', 94],
 [r20('#123a66', tx(10, 9, 8.5, '#fff', 'UNI') + tx(10, 17.500, 9, '#fff', 'BG')), 'Area Studente', 94],
 [r20('#0b2f7a', tx(10, 17, 7, '#fff', 'ILIAS')), 'ILIAS', 33],
 ['<circle cx="10" cy="10" r="10" fill="#fff"/><g fill="none" stroke-width="2.800"><path d="M14.500 6A6 6 0 0 0 5 7" stroke="#ea4335"/><path d="M5 7a6 6 0 0 0 0 6" stroke="#fbbc05"/><path d="M5 13a6 6 0 0 0 9 1.500" stroke="#34a853"/><path d="M14 14.500Q16 13 16 10h-6" stroke="#4285f4"/></g>', 'fisica elearning', 100],
 ['<g fill="none" stroke="#fbfbfe" stroke-width="1.500"><circle cx="10" cy="10" r="8.700"/><ellipse cx="10" cy="10" rx="4" ry="8.700"/><path d="M1 10h18"/></g>', 'Multimedia Internet', 131],
 [r20('#232f3e', '<use href="#aws" x="2.500" y="5" width="15" height="11"/>'), 'aws', 25],
 [r20('#fff', '<path d="M1 3h11v2H8v11H5V6H1zM11 6h2v8h2V3h4v8q-2 5-8 5z" fill="#c4161c"/>'), 'Computer Science (Inf...', 157],
 ['<path d="M7 4V1h6v3" stroke="#4285f4" stroke-width="2" fill="none"/><path d="M4 4h12v4H4z" fill="#ea4335"/><path d="M4 8h6v9H4z" fill="#34a853"/><path d="M10 8h6v9h-6z" fill="#fbbc05"/><circle cx="10" cy="10.500" r="4" fill="#4285f4"/><path d="M5 17h2v2H5zM13 17h2v2h-2z" fill="#4285f4"/>' + tx(10, 13.200, 7, '#fff', 'G'), 'Milano verso qualsiasi...', 157]
].map(b => `<span class="bm d-flex align-items-center"><svg width="20" height="20" viewBox="0 0 20 20">${b[0]}</svg><span style="margin-left:5px" data-w="${b[2]}">${b[1]}</span></span>`).join('');

/* ---------- AWS favourites ---------- */
$('favs').innerHTML = [
 ['#e8830c', '<path d="M6 4.500h3l5 11M9.500 9 6 15.500"/>', 'Lambda', 54], ['#dd344c', '<path d="M4 4h12v8M4 4v8h5M6 7h5M6 9h3"/><circle cx="13" cy="13" r="3"/><path d="m10 16 6-6"/>', 'Cognito', 54], ['#7b45d8', '<path d="M7 4 4 5.500v9L7 16zM13 4l3 1.500v9L13 16zM9 7v6M11 8l-1.500 2L11 12"/>', 'API Gateway', 85],
 ['#3f8624', '<path d="M4 5q6-3 12 0l-1.500 10q-4.500 2-9 0zM4 5q6 3 12 0M9 10l7 2"/>', 'S3', 17], ['#4059d6', '<path d="M5 4.500q4-2 8 0v11q-4 2-8 0zM5 8q4 2 8 0M5 12q4 2 8 0M15 6v3M15 11v3"/>', 'DynamoDB', 77], ['#d61f69', '<path d="M6 13q-3 0-3-3 0-2 2-2.500Q7 3 11 5q2 1 2 3"/><circle cx="11.500" cy="11" r="3"/><path d="m13.500 13 3 3"/>', 'CloudWatch', 82]
].map(f => `<span class="d-flex align-items-center"><svg width="20" height="20" viewBox="0 0 20 20"><rect width="20" height="20" fill="${f[0]}"/><g fill="none" stroke="#fff" stroke-width="1.200">${f[1]}</g></svg><span style="margin-left:6.500px" data-w="${f[3]}">${f[2]}</span></span>`).join('');

/* ---------- functions table ---------- */
const cols = [['Nome funzione', 307, 126], ['Descrizione', 186, 94], ['', 187, 0], ['Runtime', 158, 70], ['Dimensione del codice', 286, 184], ['Ultima modifica', 229, 132]], cb = '<div class="cbx"></div>', tr = '<svg width="12" height="10"><use href="#tri"/></svg>';
$('fn').innerHTML = '<colgroup><col style="width:68px">' + cols.map(c => `<col style="width:${c[1]}px">`).join('') + `</colgroup><thead><tr><th class="first"><div class="d-flex align-items-center">${cb}</div></th>`
 + cols.map(c => c[2] ? `<th><div class="d-flex align-items-center justify-content-between"><span data-w="${c[2]}">${c[0]}</span>${tr}</div></th>` : `<th><div class="d-flex align-items-center justify-content-between"><span><span data-w="57">Tipo di</span><br><span data-w="81">pacchetto</span></span><span style="padding-top:26px">${tr}</span></div></th>`).join('') + '</tr></thead><tbody>'
 + [['readerFunction', 120, 'Python 3.9', '859,0 byte', 85, '18 ore fa', 70], ['LightsailMonitoringFunction', 224, 'Python 3.8', '462,0 byte', 85, '20 giorni fa', 91], ['MainMonitoringFunction', 196, 'Python 3.8', '686,0 byte', 85, '20 giorni fa', 91], ['xmlPost', 63, 'Python 3.9', '1,0 kB', 49, '18 ore fa', 70], ['s3DynamoDB', 107, 'Python 3.9', '1,5 kB', 49, '18 ore fa', 70]].map(r => `<tr><td class="first">${cb}</td><td><span class="lnk" data-w="${r[1]}">${r[0]}</span></td><td>-</td><td><span data-w="25">Zip</span></td><td><span data-w="87">${r[2]}</span></td><td><span data-w="${r[4]}">${r[3]}</span></td><td><span data-w="${r[6]}">${r[5]}</span></td></tr>`).join('') + '</tbody>';

/* track each label so that it fills its designed width whichever font is in use */
document.querySelectorAll('[data-w]').forEach(e => { const w = e.getBoundingClientRect().width, n = e.textContent.length; if (w) e.style.letterSpacing = ((e.dataset.w - w) / n).toFixed(3) + 'px'; });
</script>
</body>
</html>
